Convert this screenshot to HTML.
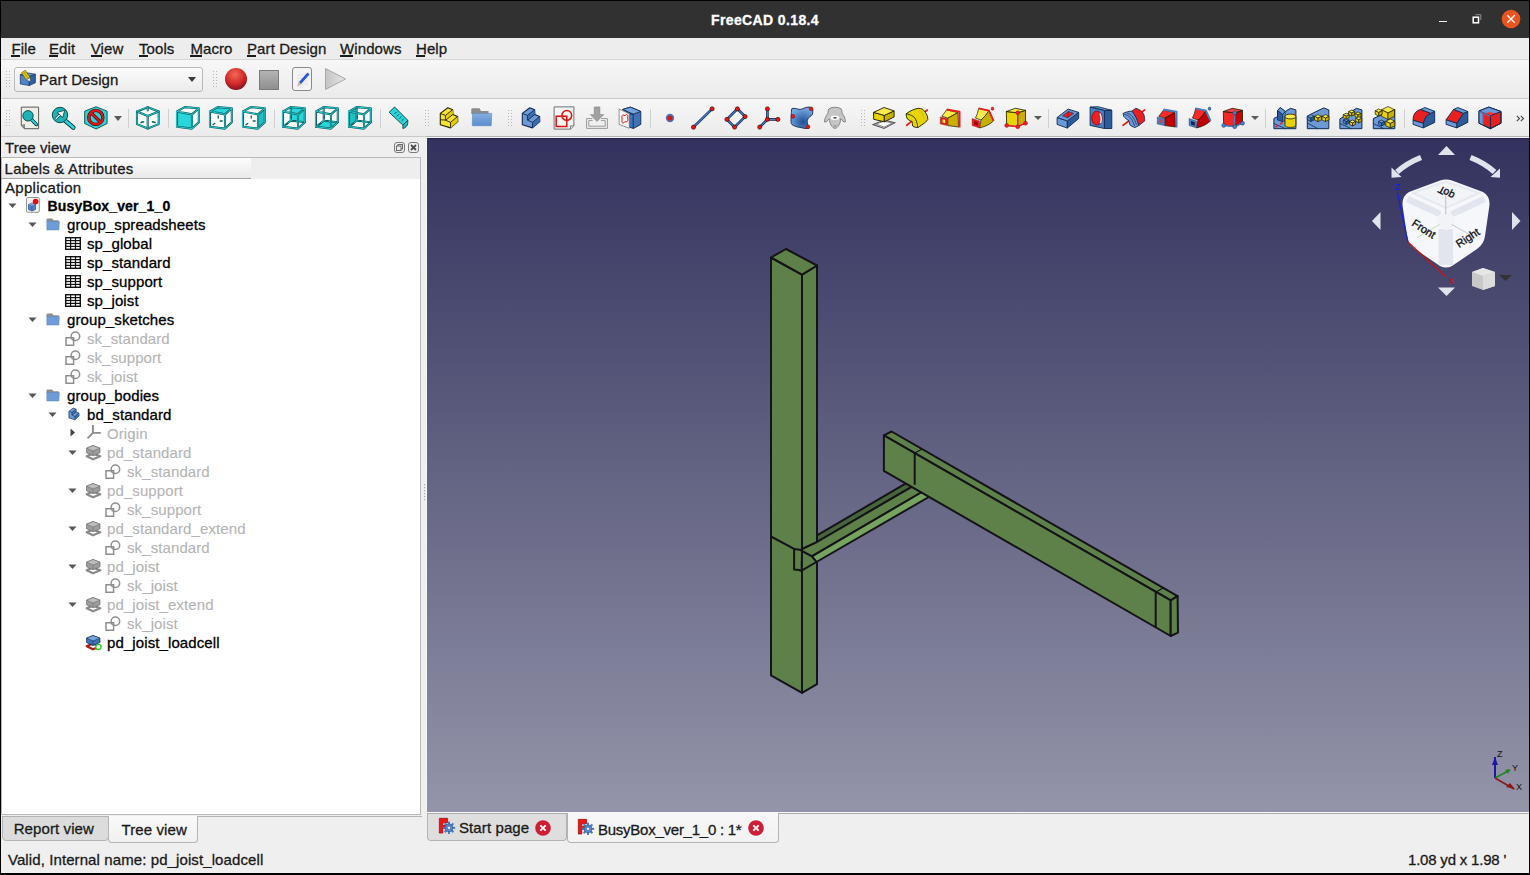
<!DOCTYPE html>
<html><head><meta charset="utf-8"><title>FreeCAD</title>
<style>
html,body{margin:0;padding:0;width:1530px;height:875px;overflow:hidden;background:#efefef;position:relative;font-family:"Liberation Sans", sans-serif}
.t{position:absolute;white-space:nowrap;line-height:1;-webkit-text-stroke:0.3px currentColor;font-family:"Liberation Sans", sans-serif}
svg{overflow:visible}
</style></head><body>
<div style="position:absolute;left:0px;top:0px;width:1530px;height:38px;background:#323132"></div><div style="position:absolute;left:0px;top:0px;width:1530px;height:1px;background:#000"></div><div class="t" style="left:711.0px;top:13.1px;font-size:14px;font-weight:bold;color:#fff;letter-spacing:0.38px;">FreeCAD 0.18.4</div><div style="position:absolute;left:1439px;top:20.5px;width:8px;height:1.5px;background:#fff"></div><svg style="position:absolute;left:1472px;top:14px" width="10" height="10" viewBox="0 0 10 10"><path d="M3.5 0.7H8.8V6" fill="none" stroke="#9a9a9a" stroke-width="0.9"/><rect x="1.2" y="3.2" width="5.3" height="5.6" fill="none" stroke="#fff" stroke-width="1.5"/></svg><svg style="position:absolute;left:1501px;top:9px" width="20" height="20" viewBox="0 0 20 20"><circle cx="10" cy="10" r="9.3" fill="#e95420"/><path d="M6.3 6.3L13.7 13.7M13.7 6.3L6.3 13.7" stroke="#fff" stroke-width="1.3"/></svg><div style="position:absolute;left:0px;top:38px;width:1530px;height:21px;background:#ededed"></div><div style="position:absolute;left:0px;top:59px;width:1530px;height:1px;background:#d6d6d6"></div><div class="t" style="left:11.4px;top:40.9px;font-size:15px;font-weight:normal;color:#1a1a1a;letter-spacing:0.1px;">File</div><div style="position:absolute;left:11px;top:55px;width:9px;height:2px;background:#1a1a1a"></div><div class="t" style="left:49.0px;top:40.9px;font-size:15px;font-weight:normal;color:#1a1a1a;letter-spacing:0.1px;">Edit</div><div style="position:absolute;left:49px;top:55px;width:9px;height:2px;background:#1a1a1a"></div><div class="t" style="left:90.7px;top:40.9px;font-size:15px;font-weight:normal;color:#1a1a1a;letter-spacing:0.1px;">View</div><div style="position:absolute;left:91px;top:55px;width:11px;height:2px;background:#1a1a1a"></div><div class="t" style="left:138.9px;top:40.9px;font-size:15px;font-weight:normal;color:#1a1a1a;letter-spacing:0.1px;">Tools</div><div style="position:absolute;left:139px;top:55px;width:9px;height:2px;background:#1a1a1a"></div><div class="t" style="left:190.4px;top:40.9px;font-size:15px;font-weight:normal;color:#1a1a1a;letter-spacing:0.1px;">Macro</div><div style="position:absolute;left:190px;top:55px;width:12px;height:2px;background:#1a1a1a"></div><div class="t" style="left:247.0px;top:40.9px;font-size:15px;font-weight:normal;color:#1a1a1a;letter-spacing:0.1px;">Part Design</div><div style="position:absolute;left:247px;top:55px;width:9px;height:2px;background:#1a1a1a"></div><div class="t" style="left:340.0px;top:40.9px;font-size:15px;font-weight:normal;color:#1a1a1a;letter-spacing:0.1px;">Windows</div><div style="position:absolute;left:340px;top:55px;width:13px;height:2px;background:#1a1a1a"></div><div class="t" style="left:416.0px;top:40.9px;font-size:15px;font-weight:normal;color:#1a1a1a;letter-spacing:0.1px;">Help</div><div style="position:absolute;left:416px;top:55px;width:9px;height:2px;background:#1a1a1a"></div><div style="position:absolute;left:0px;top:60px;width:1530px;height:38px;background:linear-gradient(#f7f7f7,#ebebeb)"></div><div style="position:absolute;left:0px;top:98px;width:1530px;height:1px;background:#c9c9c9"></div><div style="position:absolute;left:0px;top:99px;width:1530px;height:37px;background:linear-gradient(#f7f7f7,#ebebeb)"></div><div style="position:absolute;left:0px;top:136px;width:1530px;height:1px;background:#c9c9c9"></div><div style="position:absolute;left:0px;top:137px;width:1530px;height:738px;background:#efefef"></div><div style="position:absolute;left:0px;top:0px;width:1px;height:875px;background:#000"></div><div style="position:absolute;left:1529px;top:0px;width:1px;height:875px;background:#000"></div><div style="position:absolute;left:0px;top:873px;width:1530px;height:2px;background:#000"></div><svg style="position:absolute;left:6px;top:71px" width="5" height="17" viewBox="0 0 5 17"><rect x="0" y="0" width="1" height="1" fill="#b8b8b8"/><rect x="3" y="0" width="1" height="1" fill="#b8b8b8"/><rect x="0" y="3" width="1" height="1" fill="#b8b8b8"/><rect x="3" y="3" width="1" height="1" fill="#b8b8b8"/><rect x="0" y="6" width="1" height="1" fill="#b8b8b8"/><rect x="3" y="6" width="1" height="1" fill="#b8b8b8"/><rect x="0" y="9" width="1" height="1" fill="#b8b8b8"/><rect x="3" y="9" width="1" height="1" fill="#b8b8b8"/><rect x="0" y="12" width="1" height="1" fill="#b8b8b8"/><rect x="3" y="12" width="1" height="1" fill="#b8b8b8"/><rect x="0" y="15" width="1" height="1" fill="#b8b8b8"/><rect x="3" y="15" width="1" height="1" fill="#b8b8b8"/></svg><svg style="position:absolute;left:213px;top:71px" width="5" height="17" viewBox="0 0 5 17"><rect x="0" y="0" width="1" height="1" fill="#b8b8b8"/><rect x="3" y="0" width="1" height="1" fill="#b8b8b8"/><rect x="0" y="3" width="1" height="1" fill="#b8b8b8"/><rect x="3" y="3" width="1" height="1" fill="#b8b8b8"/><rect x="0" y="6" width="1" height="1" fill="#b8b8b8"/><rect x="3" y="6" width="1" height="1" fill="#b8b8b8"/><rect x="0" y="9" width="1" height="1" fill="#b8b8b8"/><rect x="3" y="9" width="1" height="1" fill="#b8b8b8"/><rect x="0" y="12" width="1" height="1" fill="#b8b8b8"/><rect x="3" y="12" width="1" height="1" fill="#b8b8b8"/><rect x="0" y="15" width="1" height="1" fill="#b8b8b8"/><rect x="3" y="15" width="1" height="1" fill="#b8b8b8"/></svg><svg style="position:absolute;left:6px;top:110px" width="5" height="17" viewBox="0 0 5 17"><rect x="0" y="0" width="1" height="1" fill="#b8b8b8"/><rect x="3" y="0" width="1" height="1" fill="#b8b8b8"/><rect x="0" y="3" width="1" height="1" fill="#b8b8b8"/><rect x="3" y="3" width="1" height="1" fill="#b8b8b8"/><rect x="0" y="6" width="1" height="1" fill="#b8b8b8"/><rect x="3" y="6" width="1" height="1" fill="#b8b8b8"/><rect x="0" y="9" width="1" height="1" fill="#b8b8b8"/><rect x="3" y="9" width="1" height="1" fill="#b8b8b8"/><rect x="0" y="12" width="1" height="1" fill="#b8b8b8"/><rect x="3" y="12" width="1" height="1" fill="#b8b8b8"/><rect x="0" y="15" width="1" height="1" fill="#b8b8b8"/><rect x="3" y="15" width="1" height="1" fill="#b8b8b8"/></svg><svg style="position:absolute;left:425px;top:110px" width="5" height="17" viewBox="0 0 5 17"><rect x="0" y="0" width="1" height="1" fill="#b8b8b8"/><rect x="3" y="0" width="1" height="1" fill="#b8b8b8"/><rect x="0" y="3" width="1" height="1" fill="#b8b8b8"/><rect x="3" y="3" width="1" height="1" fill="#b8b8b8"/><rect x="0" y="6" width="1" height="1" fill="#b8b8b8"/><rect x="3" y="6" width="1" height="1" fill="#b8b8b8"/><rect x="0" y="9" width="1" height="1" fill="#b8b8b8"/><rect x="3" y="9" width="1" height="1" fill="#b8b8b8"/><rect x="0" y="12" width="1" height="1" fill="#b8b8b8"/><rect x="3" y="12" width="1" height="1" fill="#b8b8b8"/><rect x="0" y="15" width="1" height="1" fill="#b8b8b8"/><rect x="3" y="15" width="1" height="1" fill="#b8b8b8"/></svg><svg style="position:absolute;left:508px;top:110px" width="5" height="17" viewBox="0 0 5 17"><rect x="0" y="0" width="1" height="1" fill="#b8b8b8"/><rect x="3" y="0" width="1" height="1" fill="#b8b8b8"/><rect x="0" y="3" width="1" height="1" fill="#b8b8b8"/><rect x="3" y="3" width="1" height="1" fill="#b8b8b8"/><rect x="0" y="6" width="1" height="1" fill="#b8b8b8"/><rect x="3" y="6" width="1" height="1" fill="#b8b8b8"/><rect x="0" y="9" width="1" height="1" fill="#b8b8b8"/><rect x="3" y="9" width="1" height="1" fill="#b8b8b8"/><rect x="0" y="12" width="1" height="1" fill="#b8b8b8"/><rect x="3" y="12" width="1" height="1" fill="#b8b8b8"/><rect x="0" y="15" width="1" height="1" fill="#b8b8b8"/><rect x="3" y="15" width="1" height="1" fill="#b8b8b8"/></svg><svg style="position:absolute;left:861px;top:110px" width="5" height="17" viewBox="0 0 5 17"><rect x="0" y="0" width="1" height="1" fill="#b8b8b8"/><rect x="3" y="0" width="1" height="1" fill="#b8b8b8"/><rect x="0" y="3" width="1" height="1" fill="#b8b8b8"/><rect x="3" y="3" width="1" height="1" fill="#b8b8b8"/><rect x="0" y="6" width="1" height="1" fill="#b8b8b8"/><rect x="3" y="6" width="1" height="1" fill="#b8b8b8"/><rect x="0" y="9" width="1" height="1" fill="#b8b8b8"/><rect x="3" y="9" width="1" height="1" fill="#b8b8b8"/><rect x="0" y="12" width="1" height="1" fill="#b8b8b8"/><rect x="3" y="12" width="1" height="1" fill="#b8b8b8"/><rect x="0" y="15" width="1" height="1" fill="#b8b8b8"/><rect x="3" y="15" width="1" height="1" fill="#b8b8b8"/></svg><div style="position:absolute;left:14px;top:67px;width:189px;height:25px;box-sizing:border-box;border:1px solid #b9b9b9;border-radius:3px;background:linear-gradient(#fbfbfb,#ececec)"></div><svg style="position:absolute;left:20px;top:71px" width="17" height="17" viewBox="0 0 17 17"><path d="M0.3 3.6L9.3 5.2V14.6L0.3 13Z" fill="#4f84c8" stroke="#163562" stroke-width="0.7"/><path d="M9.3 5.2L15.4 3.2V11.8L9.3 14.6Z" fill="#2e5fa6" stroke="#163562" stroke-width="0.7"/><path d="M0.3 3.6L6.9 1.8L15.4 3.2L9.3 5.2Z" fill="#5f93d6" stroke="#163562" stroke-width="0.7"/><path d="M1.48 1.76L5.32 -0.76L10.12 6.54L6.28 9.06Z" fill="#e2cc10" stroke="#5a4a00" stroke-width="0.6"/><path d="M2.5 3.5L6 1.2M4 5.8L7.5 3.5M5.5 8L9 5.7M3.5 0.5L8 7.5" stroke="#9a8400" stroke-width="0.5"/><path d="M6.28 9.06L10.12 6.54L10.3 10.5Z" fill="#fff" stroke="#444" stroke-width="0.5"/></svg><div class="t" style="left:39.0px;top:72.3px;font-size:15px;font-weight:normal;color:#1a1a1a;letter-spacing:0.1px;">Part Design</div><svg style="position:absolute;left:187.5px;top:77px" width="8" height="5" viewBox="0 0 8 5"><path d="M0 0H8L4 5Z" fill="#3a3a3a"/></svg><svg style="position:absolute;left:224px;top:67px" width="24" height="24" viewBox="0 0 24 24"><defs><radialGradient id="rg" cx="0.45" cy="0.3" r="0.7"><stop offset="0" stop-color="#f06a55"/><stop offset="0.6" stop-color="#d42a2a"/><stop offset="1" stop-color="#8a1020"/></radialGradient></defs><circle cx="12" cy="12" r="11" fill="url(#rg)"/></svg><svg style="position:absolute;left:259px;top:70px" width="20" height="20" viewBox="0 0 20 20"><defs><linearGradient id="sg" x1="0" y1="0" x2="0" y2="1"><stop offset="0" stop-color="#b5b5b5"/><stop offset="1" stop-color="#8e8e8e"/></linearGradient></defs><rect x="0.5" y="0.5" width="19" height="19" fill="url(#sg)" stroke="#7a7a7a"/></svg><div style="position:absolute;left:292px;top:67px;width:20px;height:24px;box-sizing:border-box;border:1.5px solid #8a8a8a;border-radius:3px;background:#f4f4f4"></div><svg style="position:absolute;left:295px;top:71px" width="15" height="17" viewBox="0 0 15 17"><path d="M2 4h11M2 7h11M2 10h11M2 13h11" stroke="#ddd" stroke-width="0.8"/><path d="M12.5 1.5 L4 11 L2.5 15 L6 13 L14.5 3.5Z" fill="#2a5ad8"/><path d="M4 11 L2.5 15 L6 13Z" fill="#f0c890"/></svg><svg style="position:absolute;left:325px;top:68px" width="21" height="22" viewBox="0 0 21 22"><defs><linearGradient id="pg" x1="0" y1="0" x2="1" y2="0"><stop offset="0" stop-color="#c4c4c4"/><stop offset="1" stop-color="#e6e6e6"/></linearGradient></defs><path d="M0.5 0.5 L20.5 11 L0.5 21.5Z" fill="url(#pg)" stroke="#a8a8a8"/></svg><div style="position:absolute;left:128px;top:109px;width:1px;height:19px;background:#d0d0d0"></div><div style="position:absolute;left:168px;top:109px;width:1px;height:19px;background:#d0d0d0"></div><div style="position:absolute;left:274px;top:109px;width:1px;height:19px;background:#d0d0d0"></div><div style="position:absolute;left:380px;top:109px;width:1px;height:19px;background:#d0d0d0"></div><div style="position:absolute;left:650px;top:109px;width:1px;height:19px;background:#d0d0d0"></div><div style="position:absolute;left:1048px;top:109px;width:1px;height:19px;background:#d0d0d0"></div><div style="position:absolute;left:1265px;top:109px;width:1px;height:19px;background:#d0d0d0"></div><div style="position:absolute;left:1404px;top:109px;width:1px;height:19px;background:#d0d0d0"></div><svg style="position:absolute;left:20px;top:106px" width="24" height="24" viewBox="0 0 24 24"><path d="M1.3 1.1H18.6V22.7H4.5L1.3 19.5Z" fill="#eceee8" stroke="#5a5a5a" stroke-width="1"/><path d="M1.3 19.5L4.5 18.5L4.5 22.7Z" fill="#9a9a9a" stroke="#5a5a5a" stroke-width="0.6"/><path d="M11.5 13.5L16.4 18.4" stroke="#0a3a3c" stroke-width="3.6" stroke-linecap="round"/><path d="M11.5 13.5L16.4 18.4" stroke="#2ad6da" stroke-width="2" stroke-linecap="round"/><circle cx="8" cy="9.8" r="5.2" fill="#1cb4b8" stroke="#0a3a3c" stroke-width="0.9"/></svg><svg style="position:absolute;left:52px;top:106px" width="24" height="24" viewBox="0 0 24 24"><path d="M13 14.5L21.3 21.5" stroke="#0a3a3c" stroke-width="4.6" stroke-linecap="round"/><path d="M13 14.5L21.3 21.5" stroke="#2ad6da" stroke-width="2.8" stroke-linecap="round"/><circle cx="8" cy="9" r="7.7" fill="#1cb4b8" stroke="#0a3a3c" stroke-width="0.9"/><path d="M3.8 12.8L8.6 8" stroke="#0a3a3c" stroke-width="2.6"/><path d="M3.8 12.8L8.6 8" stroke="#fff" stroke-width="1.2"/><path d="M5.2 6.4L12.7 4.3L10.7 11.5Z" fill="#fff" stroke="#0a3a3c" stroke-width="0.8"/></svg><svg style="position:absolute;left:84px;top:106px" width="24" height="24" viewBox="0 0 24 24"><path d="M12.1 0.7L23.1 5.2V17.5L12.1 23L0.7 17.5V5.2Z" fill="#2ad6da" stroke="#0a4a4c" stroke-width="0.9"/><circle cx="11.8" cy="11.4" r="7" fill="none" stroke="#3a0000" stroke-width="3.4"/><path d="M7.2 6.8L16.4 16" stroke="#3a0000" stroke-width="3.2"/><circle cx="11.8" cy="11.4" r="7" fill="none" stroke="#e01515" stroke-width="2.3"/><path d="M7.2 6.8L16.4 16" stroke="#e01515" stroke-width="2.1"/></svg><svg style="position:absolute;left:114px;top:116px" width="8" height="5" viewBox="0 0 8 5"><path d="M0 0H8L4 5Z" fill="#5a5a5a"/></svg><svg style="position:absolute;left:136px;top:106px" width="24" height="24" viewBox="0 0 24 24"><path d="M11.7 1.2L22.7 5.5V18.1L11.7 22.5L1 18.1V5.5Z" fill="#fff"/><path d="M11.7 1.2L22.7 5.5V18.1L11.7 22.5L1 18.1V5.5Z" fill="none" stroke="#0d5a5d" stroke-width="2.1" stroke-linejoin="round" stroke-linecap="round"/><path d="M11.7 1.2L22.7 5.5V18.1L11.7 22.5L1 18.1V5.5Z" fill="none" stroke="#2ad6da" stroke-width="0.9" stroke-linejoin="round" stroke-linecap="round"/><path d="M1 5.5L11.7 10L22.7 5.5M11.7 10V22.5M11.7 1.2V4.5" fill="none" stroke="#0d5a5d" stroke-width="2.1" stroke-linejoin="round" stroke-linecap="round"/><path d="M1 5.5L11.7 10L22.7 5.5M11.7 10V22.5M11.7 1.2V4.5" fill="none" stroke="#2ad6da" stroke-width="0.9" stroke-linejoin="round" stroke-linecap="round"/><path d="M5 16.5l2.5-0.8M16.5 15.7l2.5 0.8" stroke="#0d5a5d" stroke-width="1.6" stroke-linecap="round"/></svg><svg style="position:absolute;left:176px;top:106px" width="24" height="24" viewBox="0 0 24 24"><path d="M1 5.5L8.7 1.1L22.8 2.2L22.8 16.2L16 22.6L1 20.8Z" fill="#fff"/><path d="M1 5.5L16 8.4L16 22.6L1 20.8Z" fill="#2ad6da"/><path d="M1 5.5L16 8.4L16 22.6L1 20.8ZM1 5.5L8.7 1.1L22.8 2.2L16 8.4M22.8 2.2L22.8 16.2L16 22.6" fill="none" stroke="#0d5a5d" stroke-width="2.1" stroke-linejoin="round" stroke-linecap="round"/><path d="M1 5.5L16 8.4L16 22.6L1 20.8ZM1 5.5L8.7 1.1L22.8 2.2L16 8.4M22.8 2.2L22.8 16.2L16 22.6" fill="none" stroke="#2ad6da" stroke-width="0.9" stroke-linejoin="round" stroke-linecap="round"/></svg><svg style="position:absolute;left:209px;top:106px" width="24" height="24" viewBox="0 0 24 24"><path d="M1 5.5L8.7 1.1L22.8 2.2L22.8 16.2L16 22.6L1 20.8Z" fill="#fff"/><path d="M1 5.5L8.7 1.1L22.8 2.2L16 8.4Z" fill="#2ad6da"/><path d="M9.2 9.8v2.2M11.2 15h2M4 18.8l1.8-1.3" stroke="#0d5a5d" stroke-width="1.3" stroke-linecap="round"/><path d="M1 5.5L16 8.4L16 22.6L1 20.8ZM1 5.5L8.7 1.1L22.8 2.2L16 8.4M22.8 2.2L22.8 16.2L16 22.6" fill="none" stroke="#0d5a5d" stroke-width="2.1" stroke-linejoin="round" stroke-linecap="round"/><path d="M1 5.5L16 8.4L16 22.6L1 20.8ZM1 5.5L8.7 1.1L22.8 2.2L16 8.4M22.8 2.2L22.8 16.2L16 22.6" fill="none" stroke="#2ad6da" stroke-width="0.9" stroke-linejoin="round" stroke-linecap="round"/></svg><svg style="position:absolute;left:242px;top:106px" width="24" height="24" viewBox="0 0 24 24"><path d="M1 5.5L8.7 1.1L22.8 2.2L22.8 16.2L16 22.6L1 20.8Z" fill="#fff"/><path d="M16 8.4L22.8 2.2L22.8 16.2L16 22.6Z" fill="#1fc0c4"/><path d="M9.2 9.8v2.2M11.2 15h2M4 18.8l1.8-1.3" stroke="#0d5a5d" stroke-width="1.3" stroke-linecap="round"/><path d="M1 5.5L16 8.4L16 22.6L1 20.8ZM1 5.5L8.7 1.1L22.8 2.2L16 8.4M22.8 2.2L22.8 16.2L16 22.6" fill="none" stroke="#0d5a5d" stroke-width="2.1" stroke-linejoin="round" stroke-linecap="round"/><path d="M1 5.5L16 8.4L16 22.6L1 20.8ZM1 5.5L8.7 1.1L22.8 2.2L16 8.4M22.8 2.2L22.8 16.2L16 22.6" fill="none" stroke="#2ad6da" stroke-width="0.9" stroke-linejoin="round" stroke-linecap="round"/></svg><svg style="position:absolute;left:282px;top:106px" width="24" height="24" viewBox="0 0 24 24"><path d="M1 5.5L8.7 1.1L22.8 2.2L22.8 16.2L16 22.6L1 20.8Z" fill="#fff"/><path d="M8.7 1.1L22.8 2.2L22.8 16.2L8.7 14.8Z" fill="#2ad6da"/><path d="M8.7 1.1L8.7 14.8L22.8 16.2M8.7 14.8L1 20.8" fill="none" stroke="#0d5a5d" stroke-width="2.0" stroke-linejoin="round" stroke-linecap="round"/><path d="M8.7 1.1L8.7 14.8L22.8 16.2M8.7 14.8L1 20.8" fill="none" stroke="#2ad6da" stroke-width="0.8" stroke-linejoin="round" stroke-linecap="round"/><path d="M9.2 9.8v2.2M11.2 15h2M4 18.8l1.8-1.3" stroke="#0d5a5d" stroke-width="1.3" stroke-linecap="round"/><path d="M1 5.5L16 8.4L16 22.6L1 20.8ZM1 5.5L8.7 1.1L22.8 2.2L16 8.4M22.8 2.2L22.8 16.2L16 22.6" fill="none" stroke="#0d5a5d" stroke-width="2.1" stroke-linejoin="round" stroke-linecap="round"/><path d="M1 5.5L16 8.4L16 22.6L1 20.8ZM1 5.5L8.7 1.1L22.8 2.2L16 8.4M22.8 2.2L22.8 16.2L16 22.6" fill="none" stroke="#2ad6da" stroke-width="0.9" stroke-linejoin="round" stroke-linecap="round"/></svg><svg style="position:absolute;left:315px;top:106px" width="24" height="24" viewBox="0 0 24 24"><path d="M1 5.5L8.7 1.1L22.8 2.2L22.8 16.2L16 22.6L1 20.8Z" fill="#fff"/><path d="M1 20.8L8.7 14.8L22.8 16.2L16 22.6Z" fill="#2ad6da"/><path d="M8.7 1.1L8.7 14.8L22.8 16.2M8.7 14.8L1 20.8" fill="none" stroke="#0d5a5d" stroke-width="2.0" stroke-linejoin="round" stroke-linecap="round"/><path d="M8.7 1.1L8.7 14.8L22.8 16.2M8.7 14.8L1 20.8" fill="none" stroke="#2ad6da" stroke-width="0.8" stroke-linejoin="round" stroke-linecap="round"/><path d="M9.2 9.8v2.2M11.2 15h2M4 18.8l1.8-1.3" stroke="#0d5a5d" stroke-width="1.3" stroke-linecap="round"/><path d="M1 5.5L16 8.4L16 22.6L1 20.8ZM1 5.5L8.7 1.1L22.8 2.2L16 8.4M22.8 2.2L22.8 16.2L16 22.6" fill="none" stroke="#0d5a5d" stroke-width="2.1" stroke-linejoin="round" stroke-linecap="round"/><path d="M1 5.5L16 8.4L16 22.6L1 20.8ZM1 5.5L8.7 1.1L22.8 2.2L16 8.4M22.8 2.2L22.8 16.2L16 22.6" fill="none" stroke="#2ad6da" stroke-width="0.9" stroke-linejoin="round" stroke-linecap="round"/></svg><svg style="position:absolute;left:348px;top:106px" width="24" height="24" viewBox="0 0 24 24"><path d="M1 5.5L8.7 1.1L22.8 2.2L22.8 16.2L16 22.6L1 20.8Z" fill="#fff"/><path d="M1 5.5L8.7 1.1L8.7 14.8L1 20.8Z" fill="#1fc0c4"/><path d="M8.7 1.1L8.7 14.8L22.8 16.2M8.7 14.8L1 20.8" fill="none" stroke="#0d5a5d" stroke-width="2.0" stroke-linejoin="round" stroke-linecap="round"/><path d="M8.7 1.1L8.7 14.8L22.8 16.2M8.7 14.8L1 20.8" fill="none" stroke="#2ad6da" stroke-width="0.8" stroke-linejoin="round" stroke-linecap="round"/><path d="M9.2 9.8v2.2M11.2 15h2M4 18.8l1.8-1.3" stroke="#0d5a5d" stroke-width="1.3" stroke-linecap="round"/><path d="M1 5.5L16 8.4L16 22.6L1 20.8ZM1 5.5L8.7 1.1L22.8 2.2L16 8.4M22.8 2.2L22.8 16.2L16 22.6" fill="none" stroke="#0d5a5d" stroke-width="2.1" stroke-linejoin="round" stroke-linecap="round"/><path d="M1 5.5L16 8.4L16 22.6L1 20.8ZM1 5.5L8.7 1.1L22.8 2.2L16 8.4M22.8 2.2L22.8 16.2L16 22.6" fill="none" stroke="#2ad6da" stroke-width="0.9" stroke-linejoin="round" stroke-linecap="round"/></svg><svg style="position:absolute;left:386px;top:106px" width="24" height="24" viewBox="0 0 24 24"><path d="M16.9 19.1V22.6C19 22 21.8 20 21.8 17.2V14.3Z" fill="#1bbcc0" stroke="#0a3a3c" stroke-width="0.8"/><path d="M3.1 6.3L8.6 1L21.8 14.3L16.9 19.1Z" fill="#2ad6da" stroke="#0a3a3c" stroke-width="0.9"/><path d="M10.6 5.9l-1.8 1.8M12.9 8.3l-2 2M15.2 10.6l-1.8 1.8M17.5 13l-1.8 1.8" stroke="#0a3a3c" stroke-width="1"/></svg><svg style="position:absolute;left:437px;top:106px" width="24" height="24" viewBox="0 0 24 24"><path d="M3.3 7.4L10.8 1.7L15.7 3.7L15.9 8.4L20.6 10.5L20.8 15.6L13.5 21.9L3.3 18.8Z" fill="#f2e430" stroke="#2a2400" stroke-width="1.1" stroke-linejoin="round"/><path d="M8.4 9.4L15.7 3.7L15.9 8.4L8.8 14.1Z" fill="#e0cc00"/><path d="M13.5 16.4L20.6 10.5L20.8 15.6L13.5 21.9Z" fill="#e0cc00"/><path d="M3.3 7.4L8.4 9.4L15.7 3.7M8.4 9.4V14.1L13.5 16.4L20.6 10.5M13.5 16.4V21.9M8.8 14.1L15.9 8.4" fill="none" stroke="#2a2400" stroke-width="0.9"/><path d="M3.3 13.7L8.8 14.1" stroke="#2a2400" stroke-width="0.9"/></svg><svg style="position:absolute;left:470px;top:106px" width="24" height="24" viewBox="0 0 24 24"><defs><linearGradient id="fg" x1="0" y1="0" x2="0" y2="1"><stop offset="0" stop-color="#86aee0"/><stop offset="1" stop-color="#5a8ccc"/></linearGradient></defs><path d="M1.3 3.5Q1.3 2.3 2.5 2.3H9.5L11 5H18.5V8H1.3Z" fill="#8c8c8c"/><path d="M2.5 7.4H21.7L21.2 19.8H2.3Z" fill="url(#fg)" stroke="#5a86c0" stroke-width="0.6"/></svg><svg style="position:absolute;left:519px;top:106px" width="24" height="24" viewBox="0 0 24 24"><path d="M3.3 7.4L10.8 1.7L15.7 3.7L15.9 8.4L20.6 10.5L20.8 15.6L13.5 21.9L3.3 18.8Z" fill="#6d9ad6" stroke="#102a50" stroke-width="1.1" stroke-linejoin="round"/><path d="M8.4 9.4L15.7 3.7L15.9 8.4L8.8 14.1Z" fill="#3b6db0"/><path d="M13.5 16.4L20.6 10.5L20.8 15.6L13.5 21.9Z" fill="#3b6db0"/><path d="M3.3 7.4L8.4 9.4L15.7 3.7M8.4 9.4V14.1L13.5 16.4L20.6 10.5M13.5 16.4V21.9M8.8 14.1L15.9 8.4" fill="none" stroke="#102a50" stroke-width="0.9"/></svg><svg style="position:absolute;left:552px;top:106px" width="24" height="24" viewBox="0 0 24 24"><path d="M2.1 0.9H21.9V20L18.5 23.1H2.1Z" fill="#f4f6f4" stroke="#707070" stroke-width="1"/><path d="M18.5 23.1V19.8H21.9" fill="#ddd" stroke="#707070" stroke-width="0.8"/><circle cx="14.8" cy="9.4" r="4.9" fill="none" stroke="#e01010" stroke-width="1.5"/><rect x="4.2" y="10.2" width="10.6" height="10.3" fill="none" stroke="#e01010" stroke-width="1.5"/></svg><svg style="position:absolute;left:585px;top:106px" width="24" height="24" viewBox="0 0 24 24"><path d="M7.4 12.6H1.6V22.4H22.4V12.6H16.2M7.4 14.1V14.6H3.8V20.2H20.2V14.6H16.2V14.1" fill="none" stroke="#9a9a9a" stroke-width="1"/><path d="M9.2 0.9H14.9V8.6H18.8L12 15.5L5.3 8.6H9.2Z" fill="#a0a0a0" stroke="#8a8a8a" stroke-width="0.6"/></svg><svg style="position:absolute;left:618px;top:106px" width="24" height="24" viewBox="0 0 24 24"><path d="M4.6 3.5L12.5 1.1L22.8 5.5V18.4L15.4 22.5L11.3 21.1V7.8Z" fill="#3f72b8" stroke="#0f2a50" stroke-width="0.9"/><path d="M4.6 3.5L12.5 1.1L22.8 5.5L15.2 8.2Z" fill="#77a3dc" stroke="#0f2a50" stroke-width="0.9"/><path d="M15.2 8.2V22.5M11.3 7.8L15.2 8.2" stroke="#0f2a50" stroke-width="0.9"/><path d="M1.1 3.1L11.3 7.8V22.3L1.1 18.4Z" fill="#f4f6f4" stroke="#777" stroke-width="0.8"/><path d="M4 12C3 9 6 8 7 10C8 7 11 9 9.5 12C11 14 9 17 7 15.5C6 18 3 17 4 14.5Z" fill="none" stroke="#e01010" stroke-width="1"/></svg><svg style="position:absolute;left:664px;top:112px" width="12" height="12" viewBox="0 0 12 12"><circle cx="6" cy="6" r="3.4" fill="#d01818" stroke="#4a78b8" stroke-width="1.6"/></svg><svg style="position:absolute;left:691px;top:106px" width="24" height="24" viewBox="0 0 24 24"><path d="M2.5 21.2L21.1 2.8" stroke="#0f2a50" stroke-width="2.6"/><path d="M2.5 21.2L21.1 2.8" stroke="#4a7fc4" stroke-width="1.2"/><circle cx="2.5" cy="21.2" r="2.1" fill="#e81818" stroke="#3a0000" stroke-width="0.6"/><circle cx="21.1" cy="2.8" r="2.1" fill="#e81818" stroke="#3a0000" stroke-width="0.6"/></svg><svg style="position:absolute;left:724px;top:106px" width="24" height="24" viewBox="0 0 24 24"><path d="M13.4 2.9L21.1 10.6L10.6 21.1L2.9 13.4Z" fill="none" stroke="#0f2a50" stroke-width="2.6"/><path d="M13.4 2.9L21.1 10.6L10.6 21.1L2.9 13.4Z" fill="none" stroke="#4a7fc4" stroke-width="1.2"/><circle cx="13.4" cy="2.9" r="2.1" fill="#e81818" stroke="#3a0000" stroke-width="0.6"/><circle cx="21.1" cy="10.6" r="2.1" fill="#e81818" stroke="#3a0000" stroke-width="0.6"/><circle cx="10.6" cy="21.1" r="2.1" fill="#e81818" stroke="#3a0000" stroke-width="0.6"/><circle cx="2.9" cy="13.4" r="2.1" fill="#e81818" stroke="#3a0000" stroke-width="0.6"/></svg><svg style="position:absolute;left:757px;top:106px" width="24" height="24" viewBox="0 0 24 24"><path d="M10.4 2.9V13.4H20.9M10.4 13.4L2.7 21.1" fill="none" stroke="#0f2a50" stroke-width="2.6"/><path d="M10.4 2.9V13.4H20.9M10.4 13.4L2.7 21.1" fill="none" stroke="#4a7fc4" stroke-width="1.2"/><circle cx="10.4" cy="2.9" r="2.1" fill="#e81818" stroke="#3a0000" stroke-width="0.6"/><circle cx="10.4" cy="13.4" r="2.1" fill="#e81818" stroke="#3a0000" stroke-width="0.6"/><circle cx="20.9" cy="13.4" r="2.1" fill="#e81818" stroke="#3a0000" stroke-width="0.6"/><circle cx="2.7" cy="21.1" r="2.1" fill="#e81818" stroke="#3a0000" stroke-width="0.6"/></svg><svg style="position:absolute;left:790px;top:106px" width="24" height="24" viewBox="0 0 24 24"><defs><radialGradient id="sb" cx="0.55" cy="0.7" r="0.65"><stop offset="0" stop-color="#1e4f96"/><stop offset="1" stop-color="#79a8e0"/></radialGradient></defs><path d="M1.9 2.6C5 1.5 7.5 3.6 10.2 3.4C13 3 16.5 0.6 19.4 1.1C21.5 1.5 23.3 3 22.8 4.7C22.5 6 23 7.2 22.4 8.5C21 10.5 18.5 11 17.8 13.1C17 15 17.3 16 17.3 16.8C17.5 19 19.5 21.5 18.6 22.3C15.5 23 12.5 21.8 9.8 21.4C7 21 3.5 20 1.9 18.5C0.8 17 1 15.5 1 13.9C1 11 1.3 8.5 1.4 6.4C1.5 4.5 1.2 3.2 1.9 2.6Z" fill="url(#sb)" stroke="#0f2a50" stroke-width="0.9"/><circle cx="21.1" cy="2.8" r="1.9" fill="#ee1a1a" stroke="#6a0000" stroke-width="0.5"/><circle cx="2.9" cy="10.3" r="1.9" fill="#ee1a1a" stroke="#6a0000" stroke-width="0.5"/><circle cx="18" cy="20.8" r="1.9" fill="#ee1a1a" stroke="#6a0000" stroke-width="0.5"/></svg><svg style="position:absolute;left:823px;top:106px" width="24" height="24" viewBox="0 0 24 24"><path d="M12 1.3C10 1.3 8 1.5 5.7 3C4.8 5 5 6.5 4.8 7.6C3 9.5 1.5 12.5 1.5 16C3 16.5 5 14.5 6.3 12.8C6.5 17 9 22.3 12 22.3C15 22.3 17.5 17 17.7 12.8C19 14.5 21 16.5 22.4 16C22.4 12.5 21 9.5 19.2 7.6C19 6.5 19.2 5 18.3 3C16 1.5 14 1.3 12 1.3Z" fill="#c6c6c6" stroke="#7c7c7c" stroke-width="0.9"/><ellipse cx="12" cy="11.8" rx="4.2" ry="2.2" fill="#fff"/><ellipse cx="12" cy="11.8" rx="1.9" ry="0.9" fill="#555"/><path d="M10 19.5Q12 20.5 14 19.5M12 19.5V21" fill="none" stroke="#8a8a8a" stroke-width="0.7"/></svg><svg style="position:absolute;left:872px;top:106px" width="24" height="24" viewBox="0 0 24 24"><path d="M1.1 18.6L12.1 14L22.7 16.8L12.1 22.5Z" fill="#e8e8e8" stroke="#5a5a5a" stroke-width="1.1"/><path d="M3.9 18L12.1 15.3L20.3 17L12.1 21.1Z" fill="#fff" stroke="#5a5a5a" stroke-width="0.7"/><path d="M1.5 6.4L12.3 9.4V15.8L1.7 13.3Z" fill="#e8d400" stroke="#1a1a00" stroke-width="0.9"/><path d="M12.3 9.4L22.1 4.9V11L12.3 15.8Z" fill="#c8b000" stroke="#1a1a00" stroke-width="0.9"/><path d="M1.5 6.4L12.1 1.5L22.1 4.9L12.3 9.4Z" fill="#f7ea4a" stroke="#1a1a00" stroke-width="0.9"/></svg><svg style="position:absolute;left:905px;top:106px" width="24" height="24" viewBox="0 0 24 24"><path d="M1.7 19.2L6.2 15.6M19.9 5.8L22.3 4.1" stroke="#e82020" stroke-width="1.8" stroke-linecap="round"/><path d="M1.1 7.8C5 5 9 2.8 13.6 2.3C16.5 2.5 18.5 3.5 19.1 4.7C21.5 7.5 22.8 10 22.8 13.5C22.6 14.5 18 18.5 12.8 21.5C10 21.5 8 20.5 7.7 20C7.4 18.5 7.2 17 7.2 15.6C5 14.8 3.5 13.8 2.3 12.9C1.5 11 1.1 9.5 1.1 7.8Z" fill="#e8d400" stroke="#1a1a00" stroke-width="0.9"/><path d="M1.1 7.8C5 8.5 9 10 10.5 13C12 16 12.5 19 12.8 21.5" fill="none" stroke="#1a1a00" stroke-width="0.8"/><path d="M14 4C16.5 6 19 10 19 13.5" fill="none" stroke="#c8b000" stroke-width="1.2" opacity="0.5"/></svg><svg style="position:absolute;left:938px;top:106px" width="24" height="24" viewBox="0 0 24 24"><path d="M3.9 10.2L8.6 3.9L20 6.6L9.8 12.1Z" fill="#f7ea4a" stroke="#1a1a00" stroke-width="0.7"/><path d="M9.8 12.1L20 6.6L20.5 21L9.8 19.6Z" fill="#c8b000" stroke="#1a1a00" stroke-width="0.7"/><path d="M8.6 3.5L21.5 5.8V21.5" fill="none" stroke="#e82020" stroke-width="2" stroke-linejoin="round"/><path d="M2.3 10.9L9.4 12.5V19.6L2.3 18Z" fill="#e82020" stroke="#8a0a0a" stroke-width="0.4"/><path d="M4.6 13.2L7.2 13.8V17.3L4.6 16.6Z" fill="#f7ea4a"/></svg><svg style="position:absolute;left:971px;top:106px" width="24" height="24" viewBox="0 0 24 24"><path d="M4.5 12C6 9 7 6 7.7 2.3L17.9 4.7C16 8 13.5 11 10 14Z" fill="#f7ea4a" stroke="#1a1a00" stroke-width="0.7"/><path d="M10 14C13.5 11 16 8 17.9 4.7L22.6 14.9C19 18 15 20.5 8.5 21.9Z" fill="#c8b000" stroke="#1a1a00" stroke-width="0.7"/><path d="M7.7 2.3L17.9 4.7L22.6 14.9" fill="none" stroke="#e82020" stroke-width="1.9" stroke-linejoin="round"/><ellipse cx="21.5" cy="2.7" rx="1.3" ry="1.6" fill="#e82020" stroke="#8a0a0a" stroke-width="0.5"/><path d="M1.1 12.5L8.5 14.9V21.9L1.1 19.6Z" fill="#e82020" stroke="#8a0a0a" stroke-width="0.4"/><path d="M3 15L6.8 16.2V19.8L3 18.6Z" fill="#a00000"/></svg><svg style="position:absolute;left:1004px;top:106px" width="24" height="24" viewBox="0 0 24 24"><path d="M2.3 5.5L13.7 6.8V20.7L2.7 19.4Z" fill="#e8d400" stroke="#1a1a00" stroke-width="0.8"/><path d="M13.7 6.8L21.5 4.3V17.2L13.7 20.7Z" fill="#c8b000" stroke="#1a1a00" stroke-width="0.8"/><path d="M2.3 5.5L11.3 2.3L21.5 4.3L13.7 6.8Z" fill="#f7ea4a" stroke="#1a1a00" stroke-width="0.8"/><path d="M13.7 6.8V20.7L2.7 19.4M13.7 20.7L21.5 17.2" fill="none" stroke="#e82020" stroke-width="1.4"/><circle cx="13.7" cy="6.8" r="2" fill="#e82020" stroke="#8a0a0a" stroke-width="0.4"/><circle cx="2.7" cy="19.4" r="2" fill="#e82020" stroke="#8a0a0a" stroke-width="0.4"/><circle cx="13.7" cy="20.7" r="2" fill="#e82020" stroke="#8a0a0a" stroke-width="0.4"/><circle cx="21.5" cy="17.2" r="2" fill="#e82020" stroke="#8a0a0a" stroke-width="0.4"/></svg><svg style="position:absolute;left:1034px;top:116px" width="8" height="4" viewBox="0 0 8 4"><path d="M0 0H8L4 4Z" fill="#5a5a5a"/></svg><svg style="position:absolute;left:1251px;top:116px" width="8" height="4" viewBox="0 0 8 4"><path d="M0 0H8L4 4Z" fill="#5a5a5a"/></svg><svg style="position:absolute;left:1056px;top:106px" width="24" height="24" viewBox="0 0 24 24"><path d="M1.1 11.5L11.3 14.9V22.1L1.1 18.4Z" fill="#6d9ad6" stroke="#0f2a50" stroke-width="0.9"/><path d="M11.3 14.9L22.7 6.4V12.5L11.3 22.1Z" fill="#2c5a9a" stroke="#0f2a50" stroke-width="0.9"/><path d="M1.1 11.5L12.1 3.1L22.7 6.4L11.3 14.9Z" fill="#6d9ad6" stroke="#0f2a50" stroke-width="0.9"/><path d="M6.6 9.8L12.5 5.5L17.6 7.4L11.7 11.7Z" fill="#e82020" stroke="#0f2a50" stroke-width="0.6"/><path d="M12.5 5.5L11.7 11.7" stroke="#900" stroke-width="0.6"/></svg><svg style="position:absolute;left:1089px;top:106px" width="24" height="24" viewBox="0 0 24 24"><path d="M15.4 4.5L22.8 4.3V22.5H15.4Z" fill="#2c5a9a" stroke="#0f2a50" stroke-width="0.9"/><path d="M1.1 1.1L8.9 0.7L22.8 4.3L15.4 4.5Z" fill="#6d9ad6" stroke="#0f2a50" stroke-width="0.9"/><path d="M1.1 1.1L15.4 4.5V22.5L1.1 19.4Z" fill="#4a7fc4" stroke="#0f2a50" stroke-width="0.9"/><ellipse cx="7.9" cy="12.1" rx="5.2" ry="7" fill="#e82020" stroke="#8a0a0a" stroke-width="0.8"/><path d="M10.8 7.5C12.5 10 12.5 15 11.5 17" fill="none" stroke="#fff" stroke-width="1.3"/></svg><svg style="position:absolute;left:1122px;top:106px" width="24" height="24" viewBox="0 0 24 24"><path d="M1.1 19.2L6.2 15.6M20.4 5.8L22.7 3.9" stroke="#e82020" stroke-width="1.8" stroke-linecap="round"/><path d="M9.8 5.1L13.7 2.3C17 3 20 5 21.5 7.8C22.7 10 22.7 13 22.7 14.9L16.8 19.6C15 15 13 10 9.8 5.1Z" fill="#e82020" stroke="#0f2a50" stroke-width="0.8"/><path d="M1.1 7.4C4 6 7 5.2 9.8 5.1C13 9 15.5 14 16.8 19.6L12.9 21.5C11 21 9 20 8 19C7.5 17.5 7.2 16 7 14.9C5 13.5 3 12 1.8 10.5Z" fill="#6d9ad6" stroke="#0f2a50" stroke-width="0.9"/><path d="M2.5 8.5C7 9 10.5 13 12.5 20M5 7.2C9 8 12.5 12 14.5 19" fill="none" stroke="#0f2a50" stroke-width="0.7"/></svg><svg style="position:absolute;left:1155px;top:106px" width="24" height="24" viewBox="0 0 24 24"><path d="M3.9 10.2L8.6 3.9L20 6.6L9.8 12.1Z" fill="#ff2a2a" stroke="#1a1a00" stroke-width="0.7"/><path d="M9.8 12.1L20 6.6L20.5 21L9.8 19.6Z" fill="#c00000" stroke="#1a1a00" stroke-width="0.7"/><path d="M8.6 3.5L21.5 5.8V21.5" fill="none" stroke="#4a7fc4" stroke-width="2" stroke-linejoin="round"/><path d="M2.3 10.9L9.4 12.5V19.6L2.3 18Z" fill="#4a7fc4" stroke="#0f2a50" stroke-width="0.4"/><path d="M4.6 13.2L7.2 13.8V17.3L4.6 16.6Z" fill="#ff2a2a"/></svg><svg style="position:absolute;left:1188px;top:106px" width="24" height="24" viewBox="0 0 24 24"><path d="M4.5 12C6 9 7 6 7.7 2.3L17.9 4.7C16 8 13.5 11 10 14Z" fill="#ff2a2a" stroke="#1a1a00" stroke-width="0.7"/><path d="M10 14C13.5 11 16 8 17.9 4.7L22.6 14.9C19 18 15 20.5 8.5 21.9Z" fill="#c00000" stroke="#1a1a00" stroke-width="0.7"/><path d="M7.7 2.3L17.9 4.7L22.6 14.9" fill="none" stroke="#4a7fc4" stroke-width="1.9" stroke-linejoin="round"/><ellipse cx="21.5" cy="2.7" rx="1.3" ry="1.6" fill="#4a7fc4" stroke="#0f2a50" stroke-width="0.5"/><path d="M1.1 12.5L8.5 14.9V21.9L1.1 19.6Z" fill="#4a7fc4" stroke="#0f2a50" stroke-width="0.4"/><path d="M3 15L6.8 16.2V19.8L3 18.6Z" fill="#0f2a50"/></svg><svg style="position:absolute;left:1221px;top:106px" width="24" height="24" viewBox="0 0 24 24"><path d="M2.3 5.5L13.7 6.8V20.7L2.7 19.4Z" fill="#f02828" stroke="#1a1a00" stroke-width="0.8"/><path d="M13.7 6.8L21.5 4.3V17.2L13.7 20.7Z" fill="#c80000" stroke="#1a1a00" stroke-width="0.8"/><path d="M2.3 5.5L11.3 2.3L21.5 4.3L13.7 6.8Z" fill="#ff4040" stroke="#1a1a00" stroke-width="0.8"/><path d="M13.7 6.8V20.7L2.7 19.4M13.7 20.7L21.5 17.2" fill="none" stroke="#4a7fc4" stroke-width="1.4"/><circle cx="13.7" cy="6.8" r="2" fill="#4a7fc4" stroke="#0f2a50" stroke-width="0.4"/><circle cx="2.7" cy="19.4" r="2" fill="#4a7fc4" stroke="#0f2a50" stroke-width="0.4"/><circle cx="13.7" cy="20.7" r="2" fill="#4a7fc4" stroke="#0f2a50" stroke-width="0.4"/><circle cx="21.5" cy="17.2" r="2" fill="#4a7fc4" stroke="#0f2a50" stroke-width="0.4"/></svg><svg style="position:absolute;left:1273px;top:106px" width="24" height="24" viewBox="0 0 24 24"><path d="M0.9 12.5L4.5 10.6V4.7L7.2 1.5L12.3 5.5L17.4 2.3L22.9 3.9V22.7H0.9Z" fill="#6d9ad6" stroke="#0f2a50" stroke-width="1"/><path d="M0.9 17.5L12.5 22.7" stroke="#0f2a50" stroke-width="0.8"/><path d="M4.5 4.7L7.2 1.5L12.3 5.5L9.5 8.5Z" fill="#6d9ad6" stroke="#0f2a50" stroke-width="0.8"/><path d="M4.5 4.7L9.5 8.5V15.5L4.5 14Z" fill="#2c5a9a" stroke="#0f2a50" stroke-width="0.8"/><path d="M9.5 8.5L12.3 5.5V15L9.5 15.5Z" fill="#4a7fc4" stroke="#0f2a50" stroke-width="0.6"/><path d="M2.5 21.1L22.1 8.2" stroke="#e82020" stroke-width="1.6" stroke-dasharray="3 2.5"/><path d="M12 10.5V19.2A5.4 2.2 0 0 0 22.8 19.2V10.5Z" fill="#e8d400" stroke="#1a1a00" stroke-width="0.8"/><ellipse cx="17.4" cy="10.5" rx="5.4" ry="2.4" fill="#f7ea4a" stroke="#1a1a00" stroke-width="0.8"/></svg><svg style="position:absolute;left:1306px;top:106px" width="24" height="24" viewBox="0 0 24 24"><path d="M1.3 10.2L4.8 8.2L17.7 1.9L22.8 3.9V22.7H1.3Z" fill="#6d9ad6" stroke="#0f2a50" stroke-width="1"/><path d="M1.3 17L12 22.7" stroke="#0f2a50" stroke-width="0.8"/><path d="M1.2999999999999998 10.35L4.8 8.6L8.3 10.35L4.8 12.1Z" fill="#6d9ad6" stroke="#0f2a50" stroke-width="0.7"/><path d="M1.2999999999999998 10.35L4.8 12.1V15.6L1.2999999999999998 13.85Z" fill="#4a7fc4" stroke="#0f2a50" stroke-width="0.7"/><path d="M4.8 12.1L8.3 10.35V13.85L4.8 15.6Z" fill="#2c5a9a" stroke="#0f2a50" stroke-width="0.7"/><path d="M8.5 10.35L12 8.6L15.5 10.35L12 12.1Z" fill="#f7ea4a" stroke="#1a1a00" stroke-width="0.7"/><path d="M8.5 10.35L12 12.1V15.6L8.5 13.85Z" fill="#e8d400" stroke="#1a1a00" stroke-width="0.7"/><path d="M12 12.1L15.5 10.35V13.85L12 15.6Z" fill="#c8b000" stroke="#1a1a00" stroke-width="0.7"/><path d="M16.0 10.35L19.5 8.6L23.0 10.35L19.5 12.1Z" fill="#f7ea4a" stroke="#1a1a00" stroke-width="0.7"/><path d="M16.0 10.35L19.5 12.1V15.6L16.0 13.85Z" fill="#e8d400" stroke="#1a1a00" stroke-width="0.7"/><path d="M19.5 12.1L23.0 10.35V13.85L19.5 15.6Z" fill="#c8b000" stroke="#1a1a00" stroke-width="0.7"/></svg><svg style="position:absolute;left:1339px;top:106px" width="24" height="24" viewBox="0 0 24 24"><path d="M0.9 12.9L7 9L17.4 2.3L22.9 3.9V22.7H0.9Z" fill="#6d9ad6" stroke="#0f2a50" stroke-width="1"/><path d="M0.9 17.5L12.5 22.7" stroke="#0f2a50" stroke-width="0.8"/><path d="M4.2 14.0L7.2 12.5L10.2 14.0L7.2 15.5Z" fill="#6d9ad6" stroke="#0f2a50" stroke-width="0.7"/><path d="M4.2 14.0L7.2 15.5V18.5L4.2 17.0Z" fill="#4a7fc4" stroke="#0f2a50" stroke-width="0.7"/><path d="M7.2 15.5L10.2 14.0V17.0L7.2 18.5Z" fill="#2c5a9a" stroke="#0f2a50" stroke-width="0.7"/><path d="M4.2 8.7L7.2 7.199999999999999L10.2 8.7L7.2 10.2Z" fill="#f7ea4a" stroke="#1a1a00" stroke-width="0.7"/><path d="M4.2 8.7L7.2 10.2V13.2L4.2 11.7Z" fill="#e8d400" stroke="#1a1a00" stroke-width="0.7"/><path d="M7.2 10.2L10.2 8.7V11.7L7.2 13.2Z" fill="#c8b000" stroke="#1a1a00" stroke-width="0.7"/><path d="M9.7 5.5L12.7 4.0L15.7 5.5L12.7 7Z" fill="#f7ea4a" stroke="#1a1a00" stroke-width="0.7"/><path d="M9.7 5.5L12.7 7V10.0L9.7 8.5Z" fill="#e8d400" stroke="#1a1a00" stroke-width="0.7"/><path d="M12.7 7L15.7 5.5V8.5L12.7 10.0Z" fill="#c8b000" stroke="#1a1a00" stroke-width="0.7"/><path d="M16.0 7.5L19 6.0L22.0 7.5L19 9Z" fill="#f7ea4a" stroke="#1a1a00" stroke-width="0.7"/><path d="M16.0 7.5L19 9V12.0L16.0 10.5Z" fill="#e8d400" stroke="#1a1a00" stroke-width="0.7"/><path d="M19 9L22.0 7.5V10.5L19 12.0Z" fill="#c8b000" stroke="#1a1a00" stroke-width="0.7"/><path d="M16.7 12.3L19.7 10.8L22.7 12.3L19.7 13.8Z" fill="#f7ea4a" stroke="#1a1a00" stroke-width="0.7"/><path d="M16.7 12.3L19.7 13.8V16.8L16.7 15.3Z" fill="#e8d400" stroke="#1a1a00" stroke-width="0.7"/><path d="M19.7 13.8L22.7 12.3V15.3L19.7 16.8Z" fill="#c8b000" stroke="#1a1a00" stroke-width="0.7"/><path d="M10.5 15.5L13.5 14.0L16.5 15.5L13.5 17Z" fill="#f7ea4a" stroke="#1a1a00" stroke-width="0.7"/><path d="M10.5 15.5L13.5 17V20.0L10.5 18.5Z" fill="#e8d400" stroke="#1a1a00" stroke-width="0.7"/><path d="M13.5 17L16.5 15.5V18.5L13.5 20.0Z" fill="#c8b000" stroke="#1a1a00" stroke-width="0.7"/></svg><svg style="position:absolute;left:1372px;top:106px" width="24" height="24" viewBox="0 0 24 24"><path d="M1.3 12.5L8 9.5L22.8 3.5V22.7H1.3Z" fill="#6d9ad6" stroke="#0f2a50" stroke-width="1"/><path d="M1.3 17.5L12 22.7" stroke="#0f2a50" stroke-width="0.8"/><path d="M9.5 3.75L16 0.5L22.5 3.75L16 7Z" fill="#f7ea4a" stroke="#1a1a00" stroke-width="0.7"/><path d="M9.5 3.75L16 7V13.5L9.5 10.25Z" fill="#e8d400" stroke="#1a1a00" stroke-width="0.7"/><path d="M16 7L22.5 3.75V10.25L16 13.5Z" fill="#c8b000" stroke="#1a1a00" stroke-width="0.7"/><path d="M3.2 4.75L6.7 3.0L10.2 4.75L6.7 6.5Z" fill="#f7ea4a" stroke="#1a1a00" stroke-width="0.7"/><path d="M3.2 4.75L6.7 6.5V10.0L3.2 8.25Z" fill="#e8d400" stroke="#1a1a00" stroke-width="0.7"/><path d="M6.7 6.5L10.2 4.75V8.25L6.7 10.0Z" fill="#c8b000" stroke="#1a1a00" stroke-width="0.7"/><path d="M6.5 15.5L9.5 14.0L12.5 15.5L9.5 17Z" fill="#6d9ad6" stroke="#0f2a50" stroke-width="0.7"/><path d="M6.5 15.5L9.5 17V20.0L6.5 18.5Z" fill="#4a7fc4" stroke="#0f2a50" stroke-width="0.7"/><path d="M9.5 17L12.5 15.5V18.5L9.5 20.0Z" fill="#2c5a9a" stroke="#0f2a50" stroke-width="0.7"/><path d="M13.8 15.25L18.3 13.0L22.8 15.25L18.3 17.5Z" fill="#f7ea4a" stroke="#1a1a00" stroke-width="0.7"/><path d="M13.8 15.25L18.3 17.5V22.0L13.8 19.75Z" fill="#e8d400" stroke="#1a1a00" stroke-width="0.7"/><path d="M18.3 17.5L22.8 15.25V19.75L18.3 22.0Z" fill="#c8b000" stroke="#1a1a00" stroke-width="0.7"/></svg><svg style="position:absolute;left:1412px;top:106px" width="24" height="24" viewBox="0 0 24 24"><path d="M11.3 17.2C12 12 15 9 18.4 7.4L22.7 5.3V16.4L11.3 21.9Z" fill="#2c5a9a" stroke="#0f2a50" stroke-width="0.9"/><path d="M1.1 14.1L11.3 17.2V21.9L1.1 18.4Z" fill="#6d9ad6" stroke="#0f2a50" stroke-width="0.9"/><path d="M8.6 3.5L12.9 1.5L22.7 5.3L18.4 7.4Z" fill="#6d9ad6" stroke="#0f2a50" stroke-width="0.9"/><path d="M1.1 14.1C1.1 8 4 4.5 8.6 3.5L18.4 7.4C15 9 12 12 11.3 17.2Z" fill="#e82020" stroke="#0f2a50" stroke-width="0.9"/></svg><svg style="position:absolute;left:1445px;top:106px" width="24" height="24" viewBox="0 0 24 24"><path d="M11.7 17.2L18.3 7.4L22.8 5.5V16.4L11.7 21.9Z" fill="#2c5a9a" stroke="#0f2a50" stroke-width="0.9"/><path d="M1.1 13.7L11.7 17.2V21.9L1.1 18.4Z" fill="#6d9ad6" stroke="#0f2a50" stroke-width="0.9"/><path d="M8.5 3.5L12.8 1.5L22.8 5.5L18.3 7.4Z" fill="#6d9ad6" stroke="#0f2a50" stroke-width="0.9"/><path d="M1.1 13.7L8.5 3.5L18.3 7.4L11.7 17.2Z" fill="#e82020" stroke="#0f2a50" stroke-width="0.9"/></svg><svg style="position:absolute;left:1478px;top:106px" width="24" height="24" viewBox="0 0 24 24"><path d="M1 4.9L10.8 1.1L23 5.5V17.2L12.4 22.7L1 17.2Z" fill="#e82020" stroke="#0f2a50" stroke-width="1"/><path d="M1 4.9L10.8 1.1L23 5.5L12.4 9.8Z" fill="#6d9ad6"/><path d="M5 8.3L11 6L19 7.5L12.4 10.5Z" fill="#ff3030"/><path d="M1 4.9V17.2L4.9 19V8.6Z" fill="#6d9ad6"/><path d="M1 4.9L10.8 1.1L23 5.5V17.2L12.4 22.7L1 17.2Z M1 4.9L12.4 9.8L23 5.5M12.4 9.8V22.7" fill="none" stroke="#0f2a50" stroke-width="1"/><path d="M4.9 8.4V18.6M1.5 5.5L12.4 10.3" fill="none" stroke="#4a7fc4" stroke-width="1.2"/></svg><svg style="position:absolute;left:1516px;top:115px" width="9" height="7" viewBox="0 0 9 7"><path d="M0.8 0.8L3.5 3.5L0.8 6.2M4.8 0.8L7.5 3.5L4.8 6.2" fill="none" stroke="#444" stroke-width="1.1"/></svg><div class="t" style="left:5.0px;top:140.3px;font-size:15px;font-weight:normal;color:#1a1a1a;letter-spacing:0.1px;">Tree view</div><svg style="position:absolute;left:394px;top:142px" width="11" height="11" viewBox="0 0 11 11"><rect x="0.5" y="0.5" width="10" height="10" rx="2.5" fill="none" stroke="#7a7a7a" stroke-width="1"/><rect x="4" y="2.5" width="4.5" height="4.5" fill="none" stroke="#6a6a6a" stroke-width="1"/><rect x="2.5" y="4" width="4.5" height="4.5" fill="#eee" stroke="#6a6a6a" stroke-width="1"/></svg><svg style="position:absolute;left:408px;top:142px" width="11" height="11" viewBox="0 0 11 11"><rect x="0.5" y="0.5" width="10" height="10" rx="2.5" fill="none" stroke="#7a7a7a" stroke-width="1"/><path d="M3 3L8 8M8 3L3 8" stroke="#4a4a4a" stroke-width="1.8"/></svg><div style="position:absolute;left:1px;top:157px;width:420px;height:658px;box-sizing:border-box;border:1px solid #b8b8b8;background:#fff"></div><div style="position:absolute;left:2px;top:158px;width:418px;height:21px;background:#eeeeee"></div><div style="position:absolute;left:2px;top:158px;width:249px;height:20px;background:linear-gradient(#fdfdfd,#e9e9e9)"></div><div style="position:absolute;left:2px;top:178px;width:249px;height:1px;background:#a4a4a4"></div><div class="t" style="left:4.6px;top:160.8px;font-size:15px;font-weight:normal;color:#1a1a1a;letter-spacing:0.2px;">Labels &amp; Attributes</div><div class="t" style="left:5.0px;top:180.0px;font-size:15px;font-weight:normal;color:#1a1a1a;letter-spacing:0.28px;">Application</div><svg style="position:absolute;left:8px;top:203px" width="9" height="6" viewBox="0 0 9 6"><path d="M0.5 0.5H8.5L4.5 5Z" fill="#555"/></svg><svg style="position:absolute;left:26px;top:197px" width="15" height="16" viewBox="0 0 15 16"><rect x="0.5" y="0.5" width="12.8" height="14.8" rx="1.2" fill="#f2f2f2" stroke="#8a8a8a" stroke-width="0.9"/><path d="M2.5 7.5L6 6L9.5 7.5V12.5L6 14L2.5 12.5Z" fill="#4f82c6" stroke="#1f3f6e" stroke-width="0.6"/><path d="M2.5 7.5L6 9L9.5 7.5M6 9V14" fill="none" stroke="#1f3f6e" stroke-width="0.5"/><path d="M2.5 7.5L6 6L9.5 7.5L6 9Z" fill="#7aa6e0"/><circle cx="9.6" cy="4.6" r="2.9" fill="#e01010"/></svg><div class="t" style="left:47.6px;top:199.1px;font-size:14px;font-weight:bold;color:#000;letter-spacing:0.14px;">BusyBox_ver_1_0</div><svg style="position:absolute;left:28px;top:222px" width="9" height="6" viewBox="0 0 9 6"><path d="M0.5 0.5H8.5L4.5 5Z" fill="#555"/></svg><svg style="position:absolute;left:46px;top:217.5px" width="15" height="14" viewBox="0 0 15 14"><path d="M0.5 12V1.6Q0.5 0.5 1.6 0.5H6.2L7.6 2.2H12.3Q12.8 2.2 12.8 2.8V4H0.5Z" fill="#8e8e8e"/><path d="M0.8 3.6H13.4L12.9 12H0.8Z" fill="#6f9cd6" stroke="#5b87c2" stroke-width="0.5"/></svg><div class="t" style="left:67.0px;top:217.3px;font-size:15px;font-weight:normal;color:#000;letter-spacing:0.1px;">group_spreadsheets</div><svg style="position:absolute;left:65px;top:237px" width="16" height="13" viewBox="0 0 16 13"><rect x="0.7" y="0.7" width="14.6" height="11.6" fill="#fff" stroke="#111" stroke-width="1.4"/><path d="M0.7 3.6H15.3" stroke="#111" stroke-width="1.2"/><path d="M0.7 6.5H15.3" stroke="#111" stroke-width="1.2"/><path d="M0.7 9.4H15.3" stroke="#111" stroke-width="1.2"/><path d="M5.6 0.7V12.3" stroke="#111" stroke-width="1.2"/><path d="M10.5 0.7V12.3" stroke="#111" stroke-width="1.2"/></svg><div class="t" style="left:87.0px;top:236.3px;font-size:15px;font-weight:normal;color:#000;letter-spacing:0.1px;">sp_global</div><svg style="position:absolute;left:65px;top:256px" width="16" height="13" viewBox="0 0 16 13"><rect x="0.7" y="0.7" width="14.6" height="11.6" fill="#fff" stroke="#111" stroke-width="1.4"/><path d="M0.7 3.6H15.3" stroke="#111" stroke-width="1.2"/><path d="M0.7 6.5H15.3" stroke="#111" stroke-width="1.2"/><path d="M0.7 9.4H15.3" stroke="#111" stroke-width="1.2"/><path d="M5.6 0.7V12.3" stroke="#111" stroke-width="1.2"/><path d="M10.5 0.7V12.3" stroke="#111" stroke-width="1.2"/></svg><div class="t" style="left:87.0px;top:255.3px;font-size:15px;font-weight:normal;color:#000;letter-spacing:0.1px;">sp_standard</div><svg style="position:absolute;left:65px;top:275px" width="16" height="13" viewBox="0 0 16 13"><rect x="0.7" y="0.7" width="14.6" height="11.6" fill="#fff" stroke="#111" stroke-width="1.4"/><path d="M0.7 3.6H15.3" stroke="#111" stroke-width="1.2"/><path d="M0.7 6.5H15.3" stroke="#111" stroke-width="1.2"/><path d="M0.7 9.4H15.3" stroke="#111" stroke-width="1.2"/><path d="M5.6 0.7V12.3" stroke="#111" stroke-width="1.2"/><path d="M10.5 0.7V12.3" stroke="#111" stroke-width="1.2"/></svg><div class="t" style="left:87.0px;top:274.3px;font-size:15px;font-weight:normal;color:#000;letter-spacing:0.1px;">sp_support</div><svg style="position:absolute;left:65px;top:294px" width="16" height="13" viewBox="0 0 16 13"><rect x="0.7" y="0.7" width="14.6" height="11.6" fill="#fff" stroke="#111" stroke-width="1.4"/><path d="M0.7 3.6H15.3" stroke="#111" stroke-width="1.2"/><path d="M0.7 6.5H15.3" stroke="#111" stroke-width="1.2"/><path d="M0.7 9.4H15.3" stroke="#111" stroke-width="1.2"/><path d="M5.6 0.7V12.3" stroke="#111" stroke-width="1.2"/><path d="M10.5 0.7V12.3" stroke="#111" stroke-width="1.2"/></svg><div class="t" style="left:87.0px;top:293.3px;font-size:15px;font-weight:normal;color:#000;letter-spacing:0.1px;">sp_joist</div><svg style="position:absolute;left:28px;top:317px" width="9" height="6" viewBox="0 0 9 6"><path d="M0.5 0.5H8.5L4.5 5Z" fill="#555"/></svg><svg style="position:absolute;left:46px;top:312.5px" width="15" height="14" viewBox="0 0 15 14"><path d="M0.5 12V1.6Q0.5 0.5 1.6 0.5H6.2L7.6 2.2H12.3Q12.8 2.2 12.8 2.8V4H0.5Z" fill="#8e8e8e"/><path d="M0.8 3.6H13.4L12.9 12H0.8Z" fill="#6f9cd6" stroke="#5b87c2" stroke-width="0.5"/></svg><div class="t" style="left:67.0px;top:312.3px;font-size:15px;font-weight:normal;color:#000;letter-spacing:0.1px;">group_sketches</div><svg style="position:absolute;left:65.4px;top:330.5px" width="16" height="16" viewBox="0 0 16 16"><circle cx="10.4" cy="5.3" r="4.3" fill="none" stroke="#8f8f8f" stroke-width="1.5"/><path d="M1 6.8H8.6V14.2H1Z" fill="#fff" stroke="#8f8f8f" stroke-width="1.5"/><path d="M6.1 6.8A4.3 4.3 0 0 0 8.6 9.4" fill="none" stroke="#8f8f8f" stroke-width="1.5"/></svg><div class="t" style="left:87.0px;top:331.3px;font-size:15px;font-weight:normal;color:#b4b4b4;letter-spacing:0.1px;-webkit-text-stroke:0.1px currentColor;">sk_standard</div><svg style="position:absolute;left:65.4px;top:349.5px" width="16" height="16" viewBox="0 0 16 16"><circle cx="10.4" cy="5.3" r="4.3" fill="none" stroke="#8f8f8f" stroke-width="1.5"/><path d="M1 6.8H8.6V14.2H1Z" fill="#fff" stroke="#8f8f8f" stroke-width="1.5"/><path d="M6.1 6.8A4.3 4.3 0 0 0 8.6 9.4" fill="none" stroke="#8f8f8f" stroke-width="1.5"/></svg><div class="t" style="left:87.0px;top:350.3px;font-size:15px;font-weight:normal;color:#b4b4b4;letter-spacing:0.1px;-webkit-text-stroke:0.1px currentColor;">sk_support</div><svg style="position:absolute;left:65.4px;top:368.5px" width="16" height="16" viewBox="0 0 16 16"><circle cx="10.4" cy="5.3" r="4.3" fill="none" stroke="#8f8f8f" stroke-width="1.5"/><path d="M1 6.8H8.6V14.2H1Z" fill="#fff" stroke="#8f8f8f" stroke-width="1.5"/><path d="M6.1 6.8A4.3 4.3 0 0 0 8.6 9.4" fill="none" stroke="#8f8f8f" stroke-width="1.5"/></svg><div class="t" style="left:87.0px;top:369.3px;font-size:15px;font-weight:normal;color:#b4b4b4;letter-spacing:0.1px;-webkit-text-stroke:0.1px currentColor;">sk_joist</div><svg style="position:absolute;left:28px;top:393px" width="9" height="6" viewBox="0 0 9 6"><path d="M0.5 0.5H8.5L4.5 5Z" fill="#555"/></svg><svg style="position:absolute;left:46px;top:388.5px" width="15" height="14" viewBox="0 0 15 14"><path d="M0.5 12V1.6Q0.5 0.5 1.6 0.5H6.2L7.6 2.2H12.3Q12.8 2.2 12.8 2.8V4H0.5Z" fill="#8e8e8e"/><path d="M0.8 3.6H13.4L12.9 12H0.8Z" fill="#6f9cd6" stroke="#5b87c2" stroke-width="0.5"/></svg><div class="t" style="left:67.0px;top:388.3px;font-size:15px;font-weight:normal;color:#000;letter-spacing:0.1px;">group_bodies</div><svg style="position:absolute;left:48px;top:412px" width="9" height="6" viewBox="0 0 9 6"><path d="M0.5 0.5H8.5L4.5 5Z" fill="#555"/></svg><svg style="position:absolute;left:67px;top:407.3px" width="13" height="14" viewBox="0 0 13 14"><g transform="scale(0.58)"><path d="M3.3 7.4L10.8 1.7L15.7 3.7L15.9 8.4L20.6 10.5L20.8 15.6L13.5 21.9L3.3 18.8Z" fill="#6d9ad6" stroke="#102a50" stroke-width="1.1" stroke-linejoin="round"/><path d="M8.4 9.4L15.7 3.7L15.9 8.4L8.8 14.1Z" fill="#3b6db0"/><path d="M13.5 16.4L20.6 10.5L20.8 15.6L13.5 21.9Z" fill="#3b6db0"/><path d="M3.3 7.4L8.4 9.4L15.7 3.7M8.4 9.4V14.1L13.5 16.4L20.6 10.5M13.5 16.4V21.9M8.8 14.1L15.9 8.4" fill="none" stroke="#102a50" stroke-width="0.9"/></g></svg><div class="t" style="left:87.0px;top:407.3px;font-size:15px;font-weight:normal;color:#000;letter-spacing:0.1px;">bd_standard</div><svg style="position:absolute;left:70px;top:428.0px" width="6" height="9" viewBox="0 0 6 9"><path d="M0.5 0.5V8.5L5 4.5Z" fill="#444"/></svg><svg style="position:absolute;left:86.7px;top:425.2px" width="15" height="15" viewBox="0 0 15 15"><path d="M5.9 0V7.9H13.8M5.9 7.9L0.6 13.3" fill="none" stroke="#8c8c8c" stroke-width="1.9"/></svg><div class="t" style="left:107.0px;top:426.3px;font-size:15px;font-weight:normal;color:#b4b4b4;letter-spacing:0.1px;-webkit-text-stroke:0.1px currentColor;">Origin</div><svg style="position:absolute;left:68px;top:450px" width="9" height="6" viewBox="0 0 9 6"><path d="M0.5 0.5H8.5L4.5 5Z" fill="#555"/></svg><svg style="position:absolute;left:85.7px;top:444.8px" width="16" height="16" viewBox="0 0 16 16"><path d="M0.7 11.3L7 8.6L14.3 11.3L7 14.3Z" fill="#fff" stroke="#8a8a8a" stroke-width="2.2" stroke-linejoin="round"/><path d="M0.5 3.2L7 0.5L14 3.2V7.8L7 10.8L0.5 7.8Z" fill="#9c9c9c" stroke="#6e6e6e" stroke-width="0.7"/><path d="M0.5 3.2L7 0.5L14 3.2L7 6Z" fill="#bdbdbd" stroke="#6e6e6e" stroke-width="0.6"/><path d="M7 6V10.8" stroke="#6e6e6e" stroke-width="0.6"/></svg><div class="t" style="left:107.0px;top:445.3px;font-size:15px;font-weight:normal;color:#b4b4b4;letter-spacing:0.1px;-webkit-text-stroke:0.1px currentColor;">pd_standard</div><svg style="position:absolute;left:105.4px;top:463.5px" width="16" height="16" viewBox="0 0 16 16"><circle cx="10.4" cy="5.3" r="4.3" fill="none" stroke="#8f8f8f" stroke-width="1.5"/><path d="M1 6.8H8.6V14.2H1Z" fill="#fff" stroke="#8f8f8f" stroke-width="1.5"/><path d="M6.1 6.8A4.3 4.3 0 0 0 8.6 9.4" fill="none" stroke="#8f8f8f" stroke-width="1.5"/></svg><div class="t" style="left:127.0px;top:464.3px;font-size:15px;font-weight:normal;color:#b4b4b4;letter-spacing:0.1px;-webkit-text-stroke:0.1px currentColor;">sk_standard</div><svg style="position:absolute;left:68px;top:488px" width="9" height="6" viewBox="0 0 9 6"><path d="M0.5 0.5H8.5L4.5 5Z" fill="#555"/></svg><svg style="position:absolute;left:85.7px;top:482.8px" width="16" height="16" viewBox="0 0 16 16"><path d="M0.7 11.3L7 8.6L14.3 11.3L7 14.3Z" fill="#fff" stroke="#8a8a8a" stroke-width="2.2" stroke-linejoin="round"/><path d="M0.5 3.2L7 0.5L14 3.2V7.8L7 10.8L0.5 7.8Z" fill="#9c9c9c" stroke="#6e6e6e" stroke-width="0.7"/><path d="M0.5 3.2L7 0.5L14 3.2L7 6Z" fill="#bdbdbd" stroke="#6e6e6e" stroke-width="0.6"/><path d="M7 6V10.8" stroke="#6e6e6e" stroke-width="0.6"/></svg><div class="t" style="left:107.0px;top:483.3px;font-size:15px;font-weight:normal;color:#b4b4b4;letter-spacing:0.1px;-webkit-text-stroke:0.1px currentColor;">pd_support</div><svg style="position:absolute;left:105.4px;top:501.5px" width="16" height="16" viewBox="0 0 16 16"><circle cx="10.4" cy="5.3" r="4.3" fill="none" stroke="#8f8f8f" stroke-width="1.5"/><path d="M1 6.8H8.6V14.2H1Z" fill="#fff" stroke="#8f8f8f" stroke-width="1.5"/><path d="M6.1 6.8A4.3 4.3 0 0 0 8.6 9.4" fill="none" stroke="#8f8f8f" stroke-width="1.5"/></svg><div class="t" style="left:127.0px;top:502.3px;font-size:15px;font-weight:normal;color:#b4b4b4;letter-spacing:0.1px;-webkit-text-stroke:0.1px currentColor;">sk_support</div><svg style="position:absolute;left:68px;top:526px" width="9" height="6" viewBox="0 0 9 6"><path d="M0.5 0.5H8.5L4.5 5Z" fill="#555"/></svg><svg style="position:absolute;left:85.7px;top:520.8px" width="16" height="16" viewBox="0 0 16 16"><path d="M0.7 11.3L7 8.6L14.3 11.3L7 14.3Z" fill="#fff" stroke="#8a8a8a" stroke-width="2.2" stroke-linejoin="round"/><path d="M0.5 3.2L7 0.5L14 3.2V7.8L7 10.8L0.5 7.8Z" fill="#9c9c9c" stroke="#6e6e6e" stroke-width="0.7"/><path d="M0.5 3.2L7 0.5L14 3.2L7 6Z" fill="#bdbdbd" stroke="#6e6e6e" stroke-width="0.6"/><path d="M7 6V10.8" stroke="#6e6e6e" stroke-width="0.6"/></svg><div class="t" style="left:107.0px;top:521.3px;font-size:15px;font-weight:normal;color:#b4b4b4;letter-spacing:0.1px;-webkit-text-stroke:0.1px currentColor;">pd_standard_extend</div><svg style="position:absolute;left:105.4px;top:539.5px" width="16" height="16" viewBox="0 0 16 16"><circle cx="10.4" cy="5.3" r="4.3" fill="none" stroke="#8f8f8f" stroke-width="1.5"/><path d="M1 6.8H8.6V14.2H1Z" fill="#fff" stroke="#8f8f8f" stroke-width="1.5"/><path d="M6.1 6.8A4.3 4.3 0 0 0 8.6 9.4" fill="none" stroke="#8f8f8f" stroke-width="1.5"/></svg><div class="t" style="left:127.0px;top:540.3px;font-size:15px;font-weight:normal;color:#b4b4b4;letter-spacing:0.1px;-webkit-text-stroke:0.1px currentColor;">sk_standard</div><svg style="position:absolute;left:68px;top:564px" width="9" height="6" viewBox="0 0 9 6"><path d="M0.5 0.5H8.5L4.5 5Z" fill="#555"/></svg><svg style="position:absolute;left:85.7px;top:558.8px" width="16" height="16" viewBox="0 0 16 16"><path d="M0.7 11.3L7 8.6L14.3 11.3L7 14.3Z" fill="#fff" stroke="#8a8a8a" stroke-width="2.2" stroke-linejoin="round"/><path d="M0.5 3.2L7 0.5L14 3.2V7.8L7 10.8L0.5 7.8Z" fill="#9c9c9c" stroke="#6e6e6e" stroke-width="0.7"/><path d="M0.5 3.2L7 0.5L14 3.2L7 6Z" fill="#bdbdbd" stroke="#6e6e6e" stroke-width="0.6"/><path d="M7 6V10.8" stroke="#6e6e6e" stroke-width="0.6"/></svg><div class="t" style="left:107.0px;top:559.3px;font-size:15px;font-weight:normal;color:#b4b4b4;letter-spacing:0.1px;-webkit-text-stroke:0.1px currentColor;">pd_joist</div><svg style="position:absolute;left:105.4px;top:577.5px" width="16" height="16" viewBox="0 0 16 16"><circle cx="10.4" cy="5.3" r="4.3" fill="none" stroke="#8f8f8f" stroke-width="1.5"/><path d="M1 6.8H8.6V14.2H1Z" fill="#fff" stroke="#8f8f8f" stroke-width="1.5"/><path d="M6.1 6.8A4.3 4.3 0 0 0 8.6 9.4" fill="none" stroke="#8f8f8f" stroke-width="1.5"/></svg><div class="t" style="left:127.0px;top:578.3px;font-size:15px;font-weight:normal;color:#b4b4b4;letter-spacing:0.1px;-webkit-text-stroke:0.1px currentColor;">sk_joist</div><svg style="position:absolute;left:68px;top:602px" width="9" height="6" viewBox="0 0 9 6"><path d="M0.5 0.5H8.5L4.5 5Z" fill="#555"/></svg><svg style="position:absolute;left:85.7px;top:596.8px" width="16" height="16" viewBox="0 0 16 16"><path d="M0.7 11.3L7 8.6L14.3 11.3L7 14.3Z" fill="#fff" stroke="#8a8a8a" stroke-width="2.2" stroke-linejoin="round"/><path d="M0.5 3.2L7 0.5L14 3.2V7.8L7 10.8L0.5 7.8Z" fill="#9c9c9c" stroke="#6e6e6e" stroke-width="0.7"/><path d="M0.5 3.2L7 0.5L14 3.2L7 6Z" fill="#bdbdbd" stroke="#6e6e6e" stroke-width="0.6"/><path d="M7 6V10.8" stroke="#6e6e6e" stroke-width="0.6"/></svg><div class="t" style="left:107.0px;top:597.3px;font-size:15px;font-weight:normal;color:#b4b4b4;letter-spacing:0.1px;-webkit-text-stroke:0.1px currentColor;">pd_joist_extend</div><svg style="position:absolute;left:105.4px;top:615.5px" width="16" height="16" viewBox="0 0 16 16"><circle cx="10.4" cy="5.3" r="4.3" fill="none" stroke="#8f8f8f" stroke-width="1.5"/><path d="M1 6.8H8.6V14.2H1Z" fill="#fff" stroke="#8f8f8f" stroke-width="1.5"/><path d="M6.1 6.8A4.3 4.3 0 0 0 8.6 9.4" fill="none" stroke="#8f8f8f" stroke-width="1.5"/></svg><div class="t" style="left:127.0px;top:616.3px;font-size:15px;font-weight:normal;color:#b4b4b4;letter-spacing:0.1px;-webkit-text-stroke:0.1px currentColor;">sk_joist</div><svg style="position:absolute;left:85.7px;top:634.8px" width="16" height="16" viewBox="0 0 16 16"><path d="M0.7 11.3L7 8.6L14.3 11.3L7 14.3Z" fill="#fff" stroke="#b01818" stroke-width="2.2" stroke-linejoin="round"/><path d="M0.5 3.2L7 0.5L14 3.2V7.5L7 10.5L0.5 7.5Z" fill="#3f72b8" stroke="#0f2a50" stroke-width="0.7"/><path d="M0.5 3.2L7 0.5L14 3.2L7 6Z" fill="#7aa6e0" stroke="#0f2a50" stroke-width="0.6"/><path d="M7 6V10.5" stroke="#0f2a50" stroke-width="0.6"/><circle cx="12.4" cy="11.9" r="2.6" fill="#fff" stroke="#20d020" stroke-width="1.3"/></svg><div class="t" style="left:107.0px;top:635.3px;font-size:15px;font-weight:normal;color:#000;letter-spacing:0.1px;">pd_joist_loadcell</div><div style="position:absolute;left:2px;top:816px;width:420px;height:1px;background:#b4b4b4"></div><div style="position:absolute;left:2px;top:816px;width:107px;height:25px;box-sizing:border-box;border:1px solid #b4b4b4;border-radius:0 0 4px 4px;background:#dcdcdc"></div><div style="position:absolute;left:108px;top:816px;width:90px;height:27px;box-sizing:border-box;border:1px solid #b4b4b4;border-top:none;border-radius:0 0 4px 4px;background:linear-gradient(#fafafa,#f0f0f0)"></div><div class="t" style="left:13.7px;top:821.3px;font-size:15px;font-weight:normal;color:#1a1a1a;letter-spacing:0.1px;">Report view</div><div class="t" style="left:121.5px;top:821.8px;font-size:15px;font-weight:normal;color:#1a1a1a;letter-spacing:0.1px;">Tree view</div><div style="position:absolute;left:427px;top:138px;width:1103px;height:674px;background:linear-gradient(#33325e,#9495a9)"></div><div style="position:absolute;left:427px;top:136px;width:1103px;height:1px;background:#b0b0b0"></div><div style="position:absolute;left:427px;top:137px;width:1103px;height:1px;background:#f4f4f2"></div><div style="position:absolute;left:427px;top:138px;width:1103px;height:1px;background:#22214f"></div><svg style="position:absolute;left:424px;top:484px" width="2" height="17" viewBox="0 0 2 17"><rect x="0" y="0" width="1.2" height="1.2" fill="#a8a8a8"/><rect x="0" y="3" width="1.2" height="1.2" fill="#a8a8a8"/><rect x="0" y="6" width="1.2" height="1.2" fill="#a8a8a8"/><rect x="0" y="9" width="1.2" height="1.2" fill="#a8a8a8"/><rect x="0" y="12" width="1.2" height="1.2" fill="#a8a8a8"/><rect x="0" y="15" width="1.2" height="1.2" fill="#a8a8a8"/></svg><div style="position:absolute;left:426px;top:138px;width:1px;height:674px;background:#f6f6f6"></div><svg style="position:absolute;left:427px;top:138px" width="1103" height="674" viewBox="0 0 1103 674"><polygon points="344.0,119.5 375.0,136.6 375.0,554.8 344.0,537.3" fill="#5e8149" stroke="#141318" stroke-width="2" stroke-linejoin="round"/><polygon points="375.0,136.6 390.0,127.5 390.0,546.2 375.0,554.8" fill="#5e8149" stroke="#141318" stroke-width="2" stroke-linejoin="round"/><polygon points="344.0,119.5 359.0,111.0 390.0,127.5 375.0,136.6" fill="#5e8149" stroke="#141318" stroke-width="2" stroke-linejoin="round"/><polyline points="344.0,398.5 367.1,410.9" fill="none" stroke="#141318" stroke-width="2" stroke-linejoin="round"/><polygon points="390.0,397.3 478.5,345.7 487.7,347.1 390.0,404.0" fill="#47653a" stroke="#141318" stroke-width="2" stroke-linejoin="round"/><polygon points="375.0,411.0 390.0,404.0 487.7,347.1 495.9,353.5 384.9,418.3 375.0,413.1" fill="#5e8149" stroke="#141318" stroke-width="2" stroke-linejoin="round"/><polygon points="384.9,418.3 495.9,353.5 501.8,359.0 389.4,424.0" fill="#76a45f" stroke="#141318" stroke-width="2" stroke-linejoin="round"/><polygon points="375.0,413.1 384.9,418.3 389.4,424.0 374.6,432.6" fill="#5e8149" stroke="#141318" stroke-width="2" stroke-linejoin="round"/><polygon points="367.1,410.9 372.9,411.7 375.0,413.1 374.6,433.1 372.3,432.0 367.1,431.4" fill="#5e8149" stroke="#141318" stroke-width="2" stroke-linejoin="round"/><polygon points="456.9,297.4 464.6,293.5 750.6,458.1 743.7,462.4" fill="#5e8149" stroke="#141318" stroke-width="2" stroke-linejoin="round"/><polygon points="456.9,297.4 743.7,462.4 743.7,498.0 456.9,332.9" fill="#5e8149" stroke="#141318" stroke-width="2" stroke-linejoin="round"/><polygon points="743.7,462.4 750.6,458.1 751.0,494.6 743.7,498.0" fill="#5e8149" stroke="#141318" stroke-width="2" stroke-linejoin="round"/><polygon points="478.5,345.7 487.7,347.1 495.9,353.5 501.8,359.0 413.0,410.0 403.0,402.0" fill="none" stroke="none" stroke-width="0" stroke-linejoin="round"/><polyline points="487.7,314.9 487.7,346.8" fill="none" stroke="#141318" stroke-width="2" stroke-linejoin="round"/><polyline points="487.7,315.0 495.4,311.0" fill="none" stroke="#141318" stroke-width="1.2" stroke-linejoin="round"/><polyline points="728.7,454.0 728.7,489.4" fill="none" stroke="#141318" stroke-width="2" stroke-linejoin="round"/><polyline points="728.7,454.3 736.0,450.0" fill="none" stroke="#141318" stroke-width="1.2" stroke-linejoin="round"/></svg><svg style="position:absolute;left:0;top:0" width="1530" height="875"><path d="M1421 157.5 Q1407 163 1397 172" fill="none" stroke="#dfe3ec" stroke-width="5.5" stroke-linecap="butt"/><path d="M1391.5 167.5 L1391.5 177.8 L1401.5 177Z" fill="#dfe3ec"/><path d="M1470.5 157.5 Q1484.5 163 1494.5 172" fill="none" stroke="#dfe3ec" stroke-width="5.5" stroke-linecap="butt"/><path d="M1500 168.5 L1500 177.8 L1490.5 177Z" fill="#dfe3ec"/><path d="M1438 155 L1455 155 L1446.5 146Z" fill="#dfe3ec"/><path d="M1438 287.5 L1455 287.5 L1446.5 296Z" fill="#dfe3ec"/><path d="M1380.5 212 L1380.5 230 L1372 221Z" fill="#dfe3ec"/><path d="M1512 212 L1512 230 L1520.5 221Z" fill="#dfe3ec"/><path d="M1440 180.5Q1446 178.5 1452 180.5L1483 192Q1490 196 1489.5 205L1485 236Q1484 244 1477 249L1452 266Q1446 269 1440 266L1415 249Q1408 244 1407 236L1402.5 205Q1402 196 1409 192Z" fill="#f6f7fb"/><path d="M1409 196L1441 211L1441 218L1406 202Z" fill="#e2e5ed"/><path d="M1483 196L1451 211L1451 218L1486 202Z" fill="#e2e5ed"/><path d="M1438.5 229L1453 229L1453 265L1438.5 265Z" fill="#e2e5ed"/><path d="M1413 193L1446 181.5L1479 193L1446 208Z" fill="#f3f4f8" stroke="#e6e9f0" stroke-width="2"/><circle cx="1446" cy="221" r="9" fill="#f2f3f7"/><path d="M1445.7 187.5V214.5" stroke="#c8c8d0" stroke-width="1.2"/><path d="M1439.7 224.5L1417 237.5" stroke="#a8e0a0" stroke-width="0.8"/><path d="M1451.8 224.5L1474.8 237.5" stroke="#b8b8c8" stroke-width="0.8"/><text transform="translate(1446,193) rotate(28) scale(1,-1)" font-family="Liberation Sans" font-size="10.5" fill="#111" stroke="#111" stroke-width="0.35" text-anchor="middle" dy="4">Top</text><text transform="translate(1411,225) rotate(33)" font-family="Liberation Sans" font-size="11" fill="#111" stroke="#111" stroke-width="0.35">Front</text><text transform="translate(1459,248) rotate(-33)" font-family="Liberation Sans" font-size="11" fill="#111" stroke="#111" stroke-width="0.35">Right</text><path d="M1397.5 193 L1408 242" stroke="#1020f0" stroke-width="1.2"/><path d="M1408 242 L1446 277" stroke="#d01010" stroke-width="1.2"/><text x="1394.5" y="190" font-family="Liberation Sans" font-size="9" fill="#1020f0">Z</text><text x="1448.5" y="284" font-family="Liberation Sans" font-size="9" fill="#d01010">X</text><path d="M1472 272 L1483 268 L1495 272 L1495 286 L1483 290 L1472 286Z" fill="#c8c8c8"/><path d="M1472 272 L1483 268 L1495 272 L1483 276Z" fill="#e6e6e6"/><path d="M1483 276 L1495 272 L1495 286 L1483 290Z" fill="#dcdcdc"/><path d="M1499 275 L1512 275 L1505.5 281Z" fill="#333"/></svg><svg style="position:absolute;left:0;top:0" width="1530" height="875"><path d="M1495 778 L1495 757" stroke="#1a1aa0" stroke-width="2"/><path d="M1492 765 L1495 757 L1498 765Z" fill="#1a1aa0"/><path d="M1495 778 L1510 770" stroke="#1a8a1a" stroke-width="1.6"/><path d="M1505 770 L1510 769 L1508 774Z" fill="#1a8a1a"/><path d="M1495 778 L1514 789" stroke="#8a1a1a" stroke-width="1.6"/><path d="M1506 787 L1515 789 L1510 783Z" fill="#8a1a1a"/><text x="1497" y="757" font-family="Liberation Sans" font-size="9" fill="#111">Z</text><text x="1512" y="771" font-family="Liberation Sans" font-size="9" fill="#111">Y</text><text x="1516" y="790" font-family="Liberation Sans" font-size="9" fill="#111">X</text></svg><div style="position:absolute;left:427px;top:812px;width:1103px;height:1px;background:#f8f8f8"></div><div style="position:absolute;left:427px;top:813px;width:1103px;height:1px;background:#ababab"></div><div style="position:absolute;left:427px;top:814px;width:140px;height:27px;box-sizing:border-box;border:1px solid #b4b4b4;border-top:none;border-radius:0 0 4px 4px;background:#dedede"></div><div style="position:absolute;left:567px;top:813px;width:212px;height:30px;box-sizing:border-box;border:1px solid #b4b4b4;border-top:none;border-radius:0 0 4px 4px;background:linear-gradient(#f7f7f7,#f2f2f2)"></div><svg style="position:absolute;left:439px;top:818px" width="17" height="17" viewBox="0 0 17 17"><path d="M0.3 0.3H8.6V4.8H3.8V7.5H7V10.5H3.8V15.1H0.3Z" fill="#ee1515" stroke="#7a0000" stroke-width="0.6"/><rect x="9" y="3.6" width="2" height="3" fill="#4a7cc0" transform="rotate(0 10 9.8)"/><rect x="9" y="3.6" width="2" height="3" fill="#4a7cc0" transform="rotate(45 10 9.8)"/><rect x="9" y="3.6" width="2" height="3" fill="#4a7cc0" transform="rotate(90 10 9.8)"/><rect x="9" y="3.6" width="2" height="3" fill="#4a7cc0" transform="rotate(135 10 9.8)"/><rect x="9" y="3.6" width="2" height="3" fill="#4a7cc0" transform="rotate(180 10 9.8)"/><rect x="9" y="3.6" width="2" height="3" fill="#4a7cc0" transform="rotate(225 10 9.8)"/><rect x="9" y="3.6" width="2" height="3" fill="#4a7cc0" transform="rotate(270 10 9.8)"/><rect x="9" y="3.6" width="2" height="3" fill="#4a7cc0" transform="rotate(315 10 9.8)"/><circle cx="10" cy="9.8" r="3.9" fill="#5a8ad0" stroke="#2a4f8a" stroke-width="0.6"/><circle cx="10" cy="9.8" r="1.6" fill="#f4f6f8" stroke="#2a4f8a" stroke-width="0.5"/></svg><div class="t" style="left:459.0px;top:820.3px;font-size:15px;font-weight:normal;color:#1a1a1a;letter-spacing:0.1px;">Start page</div><svg style="position:absolute;left:535px;top:820px" width="16" height="16" viewBox="0 0 16 16"><circle cx="8" cy="8" r="7.8" fill="#cc1f35"/><path d="M5.3 5.3L10.7 10.7M10.7 5.3L5.3 10.7" stroke="#fff" stroke-width="1.8"/></svg><svg style="position:absolute;left:578px;top:819px" width="17" height="17" viewBox="0 0 17 17"><path d="M0.3 0.3H8.6V4.8H3.8V7.5H7V10.5H3.8V15.1H0.3Z" fill="#ee1515" stroke="#7a0000" stroke-width="0.6"/><rect x="9" y="3.6" width="2" height="3" fill="#4a7cc0" transform="rotate(0 10 9.8)"/><rect x="9" y="3.6" width="2" height="3" fill="#4a7cc0" transform="rotate(45 10 9.8)"/><rect x="9" y="3.6" width="2" height="3" fill="#4a7cc0" transform="rotate(90 10 9.8)"/><rect x="9" y="3.6" width="2" height="3" fill="#4a7cc0" transform="rotate(135 10 9.8)"/><rect x="9" y="3.6" width="2" height="3" fill="#4a7cc0" transform="rotate(180 10 9.8)"/><rect x="9" y="3.6" width="2" height="3" fill="#4a7cc0" transform="rotate(225 10 9.8)"/><rect x="9" y="3.6" width="2" height="3" fill="#4a7cc0" transform="rotate(270 10 9.8)"/><rect x="9" y="3.6" width="2" height="3" fill="#4a7cc0" transform="rotate(315 10 9.8)"/><circle cx="10" cy="9.8" r="3.9" fill="#5a8ad0" stroke="#2a4f8a" stroke-width="0.6"/><circle cx="10" cy="9.8" r="1.6" fill="#f4f6f8" stroke="#2a4f8a" stroke-width="0.5"/></svg><div class="t" style="left:598.0px;top:822.3px;font-size:15px;font-weight:normal;color:#1a1a1a;letter-spacing:-0.25px;">BusyBox_ver_1_0 : 1*</div><svg style="position:absolute;left:748px;top:820px" width="16" height="16" viewBox="0 0 16 16"><circle cx="8" cy="8" r="7.8" fill="#cc1f35"/><path d="M5.3 5.3L10.7 10.7M10.7 5.3L5.3 10.7" stroke="#fff" stroke-width="1.8"/></svg><div class="t" style="left:7.9px;top:851.6px;font-size:15px;font-weight:normal;color:#1a1a1a;letter-spacing:0.1px;">Valid, Internal name: pd_joist_loadcell</div><div class="t" style="left:1408.0px;top:851.6px;font-size:15px;font-weight:normal;color:#1a1a1a;letter-spacing:-0.2px;">1.08 yd x 1.98 '</div><div style="position:absolute;left:0px;top:0px;width:1px;height:875px;background:#000"></div><div style="position:absolute;left:1529px;top:0px;width:1px;height:875px;background:#000"></div><div style="position:absolute;left:0px;top:873px;width:1530px;height:2px;background:#000"></div>
</body></html>
